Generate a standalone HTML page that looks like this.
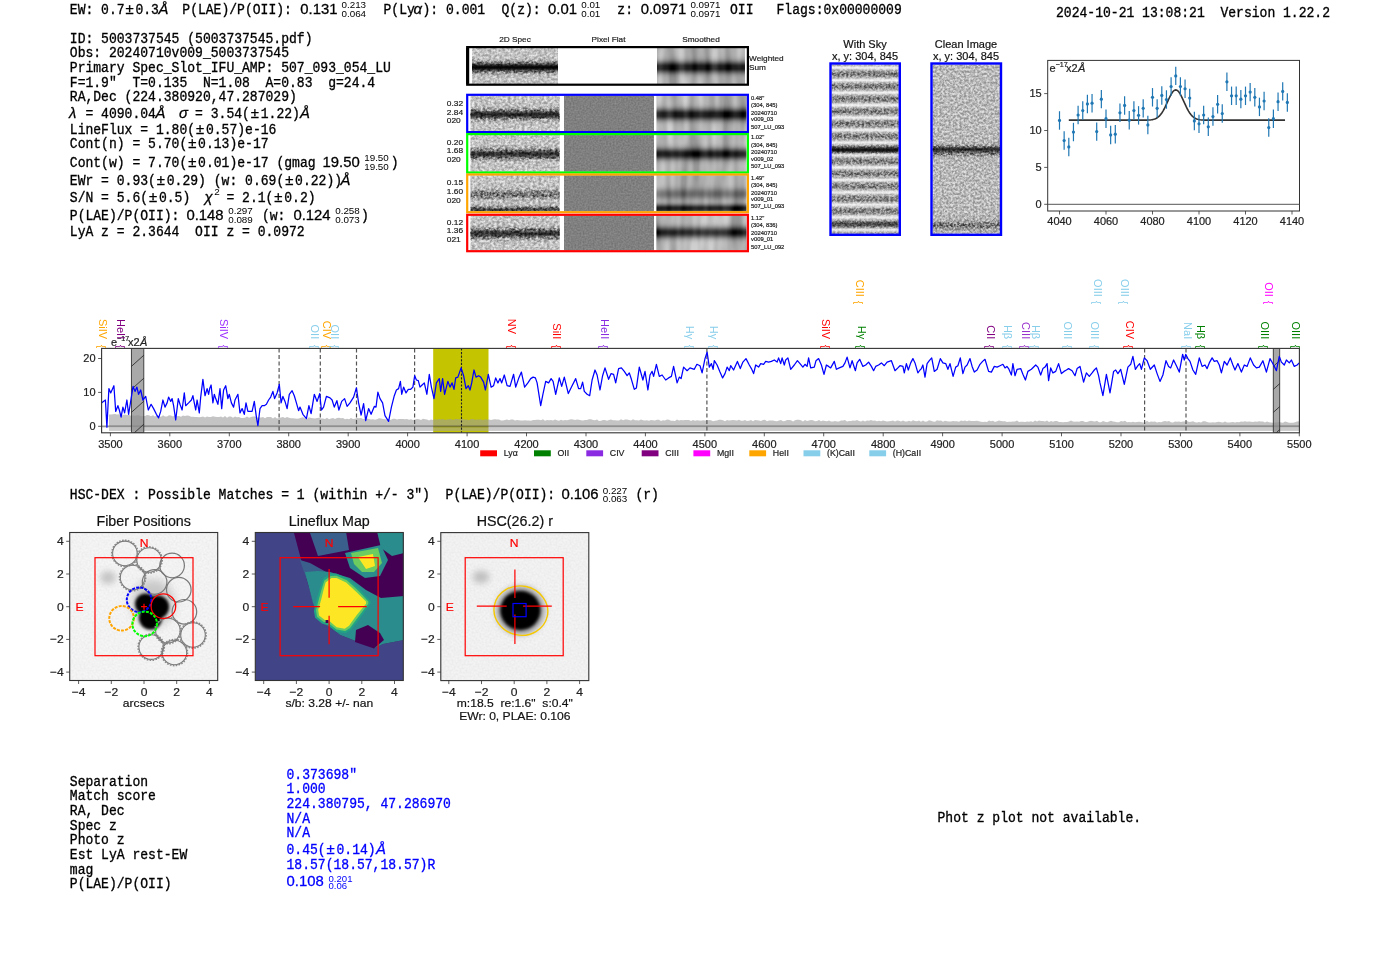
<!DOCTYPE html>
<html><head><meta charset="utf-8"><title>ELiXer report</title><style>html,body{margin:0;padding:0;background:#fff;width:1400px;height:953px;overflow:hidden}svg{display:block} text{white-space:pre}</style></head><body>
<svg width="1400" height="953" viewBox="0 0 1400 953">
<defs>
<filter id="nz1" x="0" y="0" width="1" height="1" color-interpolation-filters="sRGB">
 <feTurbulence type="fractalNoise" baseFrequency="0.36 0.42" numOctaves="2" seed="4"/>
 <feColorMatrix type="matrix" values="2.0 0 0 0 -0.5  2.0 0 0 0 -0.5  2.0 0 0 0 -0.5  0 0 0 0 1"/>
</filter>
<filter id="nzs" x="0" y="0" width="1" height="1" color-interpolation-filters="sRGB">
 <feTurbulence type="fractalNoise" baseFrequency="0.45" numOctaves="2" seed="11"/>
 <feColorMatrix type="matrix" values="2.2 0 0 0 -0.6  2.2 0 0 0 -0.6  2.2 0 0 0 -0.6  0 0 0 0 1"/>
</filter>
<filter id="nz2" x="0" y="0" width="1" height="1" color-interpolation-filters="sRGB">
 <feTurbulence type="fractalNoise" baseFrequency="0.09 0.015" numOctaves="2" seed="9"/>
 <feColorMatrix type="matrix" values="2 0 0 0 -0.5  2 0 0 0 -0.5  2 0 0 0 -0.5  0 0 0 0 1"/>
</filter>
<filter id="nz3" x="0" y="0" width="1" height="1" color-interpolation-filters="sRGB">
 <feTurbulence type="fractalNoise" baseFrequency="0.6" numOctaves="1" seed="2"/>
 <feColorMatrix type="matrix" values="1.5 0 0 0 -0.25  1.5 0 0 0 -0.25  1.5 0 0 0 -0.25  0 0 0 0 1"/>
</filter>

<filter id="blur3" x="-50%" y="-50%" width="200%" height="200%"><feGaussianBlur stdDeviation="3"/></filter>
<filter id="blur2" x="-50%" y="-50%" width="200%" height="200%"><feGaussianBlur stdDeviation="2"/></filter>
<filter id="blur15" x="-50%" y="-50%" width="200%" height="200%"><feGaussianBlur stdDeviation="1.6"/></filter>
<filter id="blur5" x="-50%" y="-50%" width="200%" height="200%"><feGaussianBlur stdDeviation="5"/></filter>
<radialGradient id="galaxy" cx="0.5" cy="0.5" r="0.5">
 <stop offset="0" stop-color="#000"/><stop offset="0.55" stop-color="#000"/><stop offset="0.75" stop-color="#555"/>
 <stop offset="0.9" stop-color="#ccc"/><stop offset="1" stop-color="#f4f4f4" stop-opacity="0"/>
</radialGradient>
<filter id="nzl" x="0" y="0" width="1" height="1" color-interpolation-filters="sRGB">
 <feTurbulence type="fractalNoise" baseFrequency="0.5" numOctaves="1" seed="7"/>
 <feColorMatrix type="matrix" values="0 0 0 0 0  0 0 0 0 0  0 0 0 0 0  1 0 0 0 -0.3"/>
</filter>
</defs>
<rect width="1400" height="953" fill="#fff"/>
<text transform="translate(69.8,13.9) scale(1.0,1.08)" font-family='"Liberation Mono", monospace' font-size="13.05" fill="#000" stroke="#000" stroke-width="0.3">EW: 0.7</text>
<text transform="translate(125.51,13.9) scale(1.144,1.06)" font-family='"Liberation Sans", sans-serif' font-size="13" fill="#000" stroke="#000" stroke-width="0.25">±</text>
<text transform="translate(135.46,13.9) scale(1.0,1.08)" font-family='"Liberation Mono", monospace' font-size="13.05" fill="#000" stroke="#000" stroke-width="0.3">0.3</text>
<text transform="translate(158.5,13.9) scale(1.144,1.06)" font-family='"Liberation Sans", sans-serif' font-size="13" fill="#000" font-style="italic" stroke="#000" stroke-width="0.25">Å</text>
<text transform="translate(182.3,13.9) scale(1.0,1.08)" font-family='"Liberation Mono", monospace' font-size="13.05" fill="#000" stroke="#000" stroke-width="0.3">P(LAE)/P(OII): </text>
<text transform="translate(300.3,13.9) scale(1.144,1.06)" font-family='"Liberation Sans", sans-serif' font-size="13" fill="#000" stroke="#000" stroke-width="0.25">0.131</text>
<text transform="translate(341.5,8.4) scale(1.144,1.06)" font-family='"Liberation Sans", sans-serif' font-size="8.6" fill="#000" >0.213</text>
<text transform="translate(341.5,17.4) scale(1.144,1.06)" font-family='"Liberation Sans", sans-serif' font-size="8.6" fill="#000" >0.064</text>
<text transform="translate(383.5,13.9) scale(1.0,1.08)" font-family='"Liberation Mono", monospace' font-size="13.05" fill="#000" stroke="#000" stroke-width="0.3">P(Ly</text>
<text transform="translate(413.5,13.9) scale(1.144,1.06)" font-family='"Liberation Sans", sans-serif' font-size="13" fill="#000" font-style="italic" stroke="#000" stroke-width="0.25">α</text>
<text transform="translate(422.5,13.9) scale(1.0,1.08)" font-family='"Liberation Mono", monospace' font-size="13.05" fill="#000" stroke="#000" stroke-width="0.3">): 0.001</text>
<text transform="translate(501.5,13.9) scale(1.0,1.08)" font-family='"Liberation Mono", monospace' font-size="13.05" fill="#000" stroke="#000" stroke-width="0.3">Q(z): </text>
<text transform="translate(548.0,13.9) scale(1.144,1.06)" font-family='"Liberation Sans", sans-serif' font-size="13" fill="#000" stroke="#000" stroke-width="0.25">0.01</text>
<text transform="translate(581.2,8.4) scale(1.144,1.06)" font-family='"Liberation Sans", sans-serif' font-size="8.6" fill="#000" >0.01</text>
<text transform="translate(581.2,17.4) scale(1.144,1.06)" font-family='"Liberation Sans", sans-serif' font-size="8.6" fill="#000" >0.01</text>
<text transform="translate(617.3,13.9) scale(1.0,1.08)" font-family='"Liberation Mono", monospace' font-size="13.05" fill="#000" stroke="#000" stroke-width="0.3">z: </text>
<text transform="translate(640.7,13.9) scale(1.144,1.06)" font-family='"Liberation Sans", sans-serif' font-size="13" fill="#000" stroke="#000" stroke-width="0.25">0.0971</text>
<text transform="translate(690.4,8.4) scale(1.144,1.06)" font-family='"Liberation Sans", sans-serif' font-size="8.6" fill="#000" >0.0971</text>
<text transform="translate(690.4,17.4) scale(1.144,1.06)" font-family='"Liberation Sans", sans-serif' font-size="8.6" fill="#000" >0.0971</text>
<text transform="translate(730.0,13.9) scale(1.0,1.08)" font-family='"Liberation Mono", monospace' font-size="13.05" fill="#000" stroke="#000" stroke-width="0.3">OII</text>
<text transform="translate(776.5,13.9) scale(1.0,1.08)" font-family='"Liberation Mono", monospace' font-size="13.05" fill="#000" stroke="#000" stroke-width="0.3">Flags:0x00000009</text>
<text transform="translate(1056.0,16.7) scale(1.0,1.08)" font-family='"Liberation Mono", monospace' font-size="13.05" fill="#000" stroke="#000" stroke-width="0.3">2024-10-21 13:08:21  Version 1.22.2</text>
<text transform="translate(69.8,42.5) scale(1.0,1.08)" font-family='"Liberation Mono", monospace' font-size="13.05" fill="#000" stroke="#000" stroke-width="0.3">ID: 5003737545 (5003737545.pdf)</text>
<text transform="translate(69.8,56.7) scale(1.0,1.08)" font-family='"Liberation Mono", monospace' font-size="13.05" fill="#000" stroke="#000" stroke-width="0.3">Obs: 20240710v009_5003737545</text>
<text transform="translate(69.8,71.6) scale(1.0,1.08)" font-family='"Liberation Mono", monospace' font-size="13.05" fill="#000" stroke="#000" stroke-width="0.3">Primary Spec_Slot_IFU_AMP: 507_093_054_LU</text>
<text transform="translate(69.8,86.6) scale(1.0,1.08)" font-family='"Liberation Mono", monospace' font-size="13.05" fill="#000" stroke="#000" stroke-width="0.3">F=1.9"  T=0.135  N=1.08  A=0.83  g=24.4</text>
<text transform="translate(69.8,101.3) scale(1.0,1.08)" font-family='"Liberation Mono", monospace' font-size="13.05" fill="#000" stroke="#000" stroke-width="0.3">RA,Dec (224.380920,47.287029)</text>
<text transform="translate(69.8,133.5) scale(1.0,1.08)" font-family='"Liberation Mono", monospace' font-size="13.05" fill="#000" stroke="#000" stroke-width="0.3">LineFlux = 1.80(</text>
<text transform="translate(195.98,133.5) scale(1.144,1.06)" font-family='"Liberation Sans", sans-serif' font-size="13" fill="#000" stroke="#000" stroke-width="0.25">±</text>
<text transform="translate(205.93,133.5) scale(1.0,1.08)" font-family='"Liberation Mono", monospace' font-size="13.05" fill="#000" stroke="#000" stroke-width="0.3">0.57)e-16</text>
<text transform="translate(69.8,148.4) scale(1.0,1.08)" font-family='"Liberation Mono", monospace' font-size="13.05" fill="#000" stroke="#000" stroke-width="0.3">Cont(n) = 5.70(</text>
<text transform="translate(188.15,148.4) scale(1.144,1.06)" font-family='"Liberation Sans", sans-serif' font-size="13" fill="#000" stroke="#000" stroke-width="0.25">±</text>
<text transform="translate(198.1,148.4) scale(1.0,1.08)" font-family='"Liberation Mono", monospace' font-size="13.05" fill="#000" stroke="#000" stroke-width="0.3">0.13)e-17</text>
<text transform="translate(69.8,235.5) scale(1.0,1.08)" font-family='"Liberation Mono", monospace' font-size="13.05" fill="#000" stroke="#000" stroke-width="0.3">LyA z = 2.3644  OII z = 0.0972</text>
<text transform="translate(69.0,118.3) scale(1.144,1.06)" font-family='"Liberation Sans", sans-serif' font-size="13" fill="#000" font-style="italic" stroke="#000" stroke-width="0.25">λ</text>
<text transform="translate(77.63,118.3) scale(1.0,1.08)" font-family='"Liberation Mono", monospace' font-size="13.05" fill="#000" stroke="#000" stroke-width="0.3"> = 4090.04</text>
<text transform="translate(155.5,118.3) scale(1.144,1.06)" font-family='"Liberation Sans", sans-serif' font-size="13" fill="#000" font-style="italic" stroke="#000" stroke-width="0.25">Å</text>
<text transform="translate(179.0,118.3) scale(1.144,1.06)" font-family='"Liberation Sans", sans-serif' font-size="13" fill="#000" font-style="italic" stroke="#000" stroke-width="0.25">σ</text>
<text transform="translate(187.25,118.3) scale(1.0,1.08)" font-family='"Liberation Mono", monospace' font-size="13.05" fill="#000" stroke="#000" stroke-width="0.3"> = 3.54(</text>
<text transform="translate(250.79,118.3) scale(1.144,1.06)" font-family='"Liberation Sans", sans-serif' font-size="13" fill="#000" stroke="#000" stroke-width="0.25">±</text>
<text transform="translate(260.74,118.3) scale(1.0,1.08)" font-family='"Liberation Mono", monospace' font-size="13.05" fill="#000" stroke="#000" stroke-width="0.3">1.22)</text>
<text transform="translate(300.0,118.3) scale(1.144,1.06)" font-family='"Liberation Sans", sans-serif' font-size="13" fill="#000" font-style="italic" stroke="#000" stroke-width="0.25">Å</text>
<text transform="translate(69.8,166.7) scale(1.0,1.08)" font-family='"Liberation Mono", monospace' font-size="13.05" fill="#000" stroke="#000" stroke-width="0.3">Cont(w) = 7.70(</text>
<text transform="translate(188.15,166.7) scale(1.144,1.06)" font-family='"Liberation Sans", sans-serif' font-size="13" fill="#000" stroke="#000" stroke-width="0.25">±</text>
<text transform="translate(198.1,166.7) scale(1.0,1.08)" font-family='"Liberation Mono", monospace' font-size="13.05" fill="#000" stroke="#000" stroke-width="0.3">0.01)e-17 (gmag </text>
<text transform="translate(322.5,166.7) scale(1.144,1.06)" font-family='"Liberation Sans", sans-serif' font-size="13" fill="#000" stroke="#000" stroke-width="0.25">19.50</text>
<text transform="translate(364.2,160.8) scale(1.144,1.06)" font-family='"Liberation Sans", sans-serif' font-size="8.6" fill="#000" >19.50</text>
<text transform="translate(364.2,169.6) scale(1.144,1.06)" font-family='"Liberation Sans", sans-serif' font-size="8.6" fill="#000" >19.50</text>
<text transform="translate(390.83,166.7) scale(1.0,1.08)" font-family='"Liberation Mono", monospace' font-size="13.05" fill="#000" stroke="#000" stroke-width="0.3">)</text>
<text transform="translate(69.8,184.5) scale(1.0,1.08)" font-family='"Liberation Mono", monospace' font-size="13.05" fill="#000" stroke="#000" stroke-width="0.3">EWr = 0.93(</text>
<text transform="translate(156.83,184.5) scale(1.144,1.06)" font-family='"Liberation Sans", sans-serif' font-size="13" fill="#000" stroke="#000" stroke-width="0.25">±</text>
<text transform="translate(166.78,184.5) scale(1.0,1.08)" font-family='"Liberation Mono", monospace' font-size="13.05" fill="#000" stroke="#000" stroke-width="0.3">0.29) (w: 0.69(</text>
<text transform="translate(285.13,184.5) scale(1.144,1.06)" font-family='"Liberation Sans", sans-serif' font-size="13" fill="#000" stroke="#000" stroke-width="0.25">±</text>
<text transform="translate(295.08,184.5) scale(1.0,1.08)" font-family='"Liberation Mono", monospace' font-size="13.05" fill="#000" stroke="#000" stroke-width="0.3">0.22))</text>
<text transform="translate(340.5,184.5) scale(1.144,1.06)" font-family='"Liberation Sans", sans-serif' font-size="13" fill="#000" font-style="italic" stroke="#000" stroke-width="0.25">Å</text>
<text transform="translate(69.8,201.7) scale(1.0,1.08)" font-family='"Liberation Mono", monospace' font-size="13.05" fill="#000" stroke="#000" stroke-width="0.3">S/N = 5.6(</text>
<text transform="translate(149.0,201.7) scale(1.144,1.06)" font-family='"Liberation Sans", sans-serif' font-size="13" fill="#000" stroke="#000" stroke-width="0.25">±</text>
<text transform="translate(158.95,201.7) scale(1.0,1.08)" font-family='"Liberation Mono", monospace' font-size="13.05" fill="#000" stroke="#000" stroke-width="0.3">0.5)</text>
<text transform="translate(204.5,201.7) scale(1.144,1.06)" font-family='"Liberation Sans", sans-serif' font-size="13" fill="#000" font-style="italic" stroke="#000" stroke-width="0.25">χ</text>
<text transform="translate(214.2,194.8) scale(1.144,1.06)" font-family='"Liberation Sans", sans-serif' font-size="8.6" fill="#000" >2</text>
<text transform="translate(226.4,201.7) scale(1.0,1.08)" font-family='"Liberation Mono", monospace' font-size="13.05" fill="#000" stroke="#000" stroke-width="0.3">= 2.1(</text>
<text transform="translate(274.28,201.7) scale(1.144,1.06)" font-family='"Liberation Sans", sans-serif' font-size="13" fill="#000" stroke="#000" stroke-width="0.25">±</text>
<text transform="translate(284.23,201.7) scale(1.0,1.08)" font-family='"Liberation Mono", monospace' font-size="13.05" fill="#000" stroke="#000" stroke-width="0.3">0.2)</text>
<text transform="translate(69.8,219.5) scale(1.0,1.08)" font-family='"Liberation Mono", monospace' font-size="13.05" fill="#000" stroke="#000" stroke-width="0.3">P(LAE)/P(OII): </text>
<text transform="translate(186.4,219.5) scale(1.144,1.06)" font-family='"Liberation Sans", sans-serif' font-size="13" fill="#000" stroke="#000" stroke-width="0.25">0.148</text>
<text transform="translate(228.2,213.6) scale(1.144,1.06)" font-family='"Liberation Sans", sans-serif' font-size="8.6" fill="#000" >0.297</text>
<text transform="translate(228.2,222.6) scale(1.144,1.06)" font-family='"Liberation Sans", sans-serif' font-size="8.6" fill="#000" >0.089</text>
<text transform="translate(261.9,219.5) scale(1.0,1.08)" font-family='"Liberation Mono", monospace' font-size="13.05" fill="#000" stroke="#000" stroke-width="0.3">(w: </text>
<text transform="translate(293.4,219.5) scale(1.144,1.06)" font-family='"Liberation Sans", sans-serif' font-size="13" fill="#000" stroke="#000" stroke-width="0.25">0.124</text>
<text transform="translate(335.2,213.6) scale(1.144,1.06)" font-family='"Liberation Sans", sans-serif' font-size="8.6" fill="#000" >0.258</text>
<text transform="translate(335.2,222.6) scale(1.144,1.06)" font-family='"Liberation Sans", sans-serif' font-size="8.6" fill="#000" >0.073</text>
<text transform="translate(361.0,219.5) scale(1.0,1.08)" font-family='"Liberation Mono", monospace' font-size="13.05" fill="#000" stroke="#000" stroke-width="0.3">)</text>
<text transform="translate(515,41.5) scale(1.1,1.06)" font-family='"Liberation Sans", sans-serif' font-size="7.5" fill="#222" text-anchor="middle"  stroke="#222" stroke-width="0.18">2D Spec</text>
<text transform="translate(608.5,41.5) scale(1.1,1.06)" font-family='"Liberation Sans", sans-serif' font-size="7.5" fill="#222" text-anchor="middle"  stroke="#222" stroke-width="0.18">Pixel Flat</text>
<text transform="translate(701,41.5) scale(1.1,1.06)" font-family='"Liberation Sans", sans-serif' font-size="7.5" fill="#222" text-anchor="middle"  stroke="#222" stroke-width="0.18">Smoothed</text>
<rect x="466.2" y="47.9" width="282.7" height="36.00000000000001" fill="#fff"/>
<linearGradient id="g1" x1="0" y1="0" x2="0" y2="1"><stop offset="0.000" stop-color="rgb(194,194,194)"/><stop offset="0.025" stop-color="rgb(194,194,194)"/><stop offset="0.050" stop-color="rgb(194,194,194)"/><stop offset="0.075" stop-color="rgb(194,194,194)"/><stop offset="0.100" stop-color="rgb(194,194,194)"/><stop offset="0.125" stop-color="rgb(194,194,194)"/><stop offset="0.150" stop-color="rgb(194,194,194)"/><stop offset="0.175" stop-color="rgb(194,194,194)"/><stop offset="0.200" stop-color="rgb(194,194,194)"/><stop offset="0.225" stop-color="rgb(194,194,194)"/><stop offset="0.250" stop-color="rgb(193,193,193)"/><stop offset="0.275" stop-color="rgb(191,191,191)"/><stop offset="0.300" stop-color="rgb(188,188,188)"/><stop offset="0.325" stop-color="rgb(182,182,182)"/><stop offset="0.350" stop-color="rgb(172,172,172)"/><stop offset="0.375" stop-color="rgb(156,156,156)"/><stop offset="0.400" stop-color="rgb(134,134,134)"/><stop offset="0.425" stop-color="rgb(107,107,107)"/><stop offset="0.450" stop-color="rgb(76,76,76)"/><stop offset="0.475" stop-color="rgb(45,45,45)"/><stop offset="0.500" stop-color="rgb(21,21,21)"/><stop offset="0.525" stop-color="rgb(7,7,7)"/><stop offset="0.550" stop-color="rgb(6,6,6)"/><stop offset="0.575" stop-color="rgb(19,19,19)"/><stop offset="0.600" stop-color="rgb(42,42,42)"/><stop offset="0.625" stop-color="rgb(72,72,72)"/><stop offset="0.650" stop-color="rgb(103,103,103)"/><stop offset="0.675" stop-color="rgb(131,131,131)"/><stop offset="0.700" stop-color="rgb(154,154,154)"/><stop offset="0.725" stop-color="rgb(170,170,170)"/><stop offset="0.750" stop-color="rgb(181,181,181)"/><stop offset="0.775" stop-color="rgb(188,188,188)"/><stop offset="0.800" stop-color="rgb(191,191,191)"/><stop offset="0.825" stop-color="rgb(193,193,193)"/><stop offset="0.850" stop-color="rgb(194,194,194)"/><stop offset="0.875" stop-color="rgb(194,194,194)"/><stop offset="0.900" stop-color="rgb(194,194,194)"/><stop offset="0.925" stop-color="rgb(194,194,194)"/><stop offset="0.950" stop-color="rgb(194,194,194)"/><stop offset="0.975" stop-color="rgb(194,194,194)"/><stop offset="1.000" stop-color="rgb(194,194,194)"/></linearGradient>
<rect x="472" y="47.9" width="86" height="36.00000000000001" fill="url(#g1)"/>
<rect x="472" y="47.9" width="86" height="36.00000000000001" filter="url(#nz1)" opacity="0.6" style="mix-blend-mode:overlay"/>
<linearGradient id="g2" x1="0" y1="0" x2="0" y2="1"><stop offset="0.000" stop-color="rgb(189,189,189)"/><stop offset="0.025" stop-color="rgb(189,189,189)"/><stop offset="0.050" stop-color="rgb(189,189,189)"/><stop offset="0.075" stop-color="rgb(189,189,189)"/><stop offset="0.100" stop-color="rgb(189,189,189)"/><stop offset="0.125" stop-color="rgb(189,189,189)"/><stop offset="0.150" stop-color="rgb(189,189,189)"/><stop offset="0.175" stop-color="rgb(188,188,188)"/><stop offset="0.200" stop-color="rgb(187,187,187)"/><stop offset="0.225" stop-color="rgb(184,184,184)"/><stop offset="0.250" stop-color="rgb(180,180,180)"/><stop offset="0.275" stop-color="rgb(174,174,174)"/><stop offset="0.300" stop-color="rgb(165,165,165)"/><stop offset="0.325" stop-color="rgb(152,152,152)"/><stop offset="0.350" stop-color="rgb(136,136,136)"/><stop offset="0.375" stop-color="rgb(115,115,115)"/><stop offset="0.400" stop-color="rgb(91,91,91)"/><stop offset="0.425" stop-color="rgb(65,65,65)"/><stop offset="0.450" stop-color="rgb(40,40,40)"/><stop offset="0.475" stop-color="rgb(17,17,17)"/><stop offset="0.500" stop-color="rgb(0,0,0)"/><stop offset="0.525" stop-color="rgb(0,0,0)"/><stop offset="0.550" stop-color="rgb(0,0,0)"/><stop offset="0.575" stop-color="rgb(0,0,0)"/><stop offset="0.600" stop-color="rgb(15,15,15)"/><stop offset="0.625" stop-color="rgb(37,37,37)"/><stop offset="0.650" stop-color="rgb(62,62,62)"/><stop offset="0.675" stop-color="rgb(88,88,88)"/><stop offset="0.700" stop-color="rgb(112,112,112)"/><stop offset="0.725" stop-color="rgb(133,133,133)"/><stop offset="0.750" stop-color="rgb(151,151,151)"/><stop offset="0.775" stop-color="rgb(164,164,164)"/><stop offset="0.800" stop-color="rgb(173,173,173)"/><stop offset="0.825" stop-color="rgb(180,180,180)"/><stop offset="0.850" stop-color="rgb(184,184,184)"/><stop offset="0.875" stop-color="rgb(186,186,186)"/><stop offset="0.900" stop-color="rgb(188,188,188)"/><stop offset="0.925" stop-color="rgb(189,189,189)"/><stop offset="0.950" stop-color="rgb(189,189,189)"/><stop offset="0.975" stop-color="rgb(189,189,189)"/><stop offset="1.000" stop-color="rgb(189,189,189)"/></linearGradient>
<rect x="657" y="47.9" width="88" height="36.00000000000001" fill="url(#g2)"/>
<rect x="657" y="47.9" width="88" height="36.00000000000001" filter="url(#nz2)" opacity="0.22"/>
<rect x="467.2" y="47.1" width="280.7" height="37.60000000000001" fill="none" stroke="#000" stroke-width="2.2"/>
<rect x="466.2" y="47.9" width="3" height="36.00000000000001" fill="#000"/>
<text transform="translate(749,61) scale(1.1,1.06)" font-family='"Liberation Sans", sans-serif' font-size="7.5" fill="#222"  stroke="#222" stroke-width="0.18">Weighted</text>
<text transform="translate(749,70) scale(1.1,1.06)" font-family='"Liberation Sans", sans-serif' font-size="7.5" fill="#222"  stroke="#222" stroke-width="0.18">Sum</text>
<rect x="466.2" y="95.6" width="282.7" height="35.70000000000002" fill="#fff"/>
<linearGradient id="g3" x1="0" y1="0" x2="0" y2="1"><stop offset="0.000" stop-color="rgb(194,194,194)"/><stop offset="0.025" stop-color="rgb(194,194,194)"/><stop offset="0.050" stop-color="rgb(194,194,194)"/><stop offset="0.075" stop-color="rgb(194,194,194)"/><stop offset="0.100" stop-color="rgb(194,194,194)"/><stop offset="0.125" stop-color="rgb(194,194,194)"/><stop offset="0.150" stop-color="rgb(194,194,194)"/><stop offset="0.175" stop-color="rgb(194,194,194)"/><stop offset="0.200" stop-color="rgb(194,194,194)"/><stop offset="0.225" stop-color="rgb(194,194,194)"/><stop offset="0.250" stop-color="rgb(193,193,193)"/><stop offset="0.275" stop-color="rgb(192,192,192)"/><stop offset="0.300" stop-color="rgb(188,188,188)"/><stop offset="0.325" stop-color="rgb(183,183,183)"/><stop offset="0.350" stop-color="rgb(173,173,173)"/><stop offset="0.375" stop-color="rgb(158,158,158)"/><stop offset="0.400" stop-color="rgb(138,138,138)"/><stop offset="0.425" stop-color="rgb(113,113,113)"/><stop offset="0.450" stop-color="rgb(86,86,86)"/><stop offset="0.475" stop-color="rgb(61,61,61)"/><stop offset="0.500" stop-color="rgb(43,43,43)"/><stop offset="0.525" stop-color="rgb(35,35,35)"/><stop offset="0.550" stop-color="rgb(39,39,39)"/><stop offset="0.575" stop-color="rgb(54,54,54)"/><stop offset="0.600" stop-color="rgb(77,77,77)"/><stop offset="0.625" stop-color="rgb(104,104,104)"/><stop offset="0.650" stop-color="rgb(130,130,130)"/><stop offset="0.675" stop-color="rgb(152,152,152)"/><stop offset="0.700" stop-color="rgb(168,168,168)"/><stop offset="0.725" stop-color="rgb(180,180,180)"/><stop offset="0.750" stop-color="rgb(187,187,187)"/><stop offset="0.775" stop-color="rgb(191,191,191)"/><stop offset="0.800" stop-color="rgb(193,193,193)"/><stop offset="0.825" stop-color="rgb(194,194,194)"/><stop offset="0.850" stop-color="rgb(194,194,194)"/><stop offset="0.875" stop-color="rgb(194,194,194)"/><stop offset="0.900" stop-color="rgb(194,194,194)"/><stop offset="0.925" stop-color="rgb(194,194,194)"/><stop offset="0.950" stop-color="rgb(194,194,194)"/><stop offset="0.975" stop-color="rgb(194,194,194)"/><stop offset="1.000" stop-color="rgb(194,194,194)"/></linearGradient>
<rect x="470.5" y="95.6" width="89.20000000000005" height="35.70000000000002" fill="url(#g3)"/>
<rect x="470.5" y="95.6" width="89.20000000000005" height="35.70000000000002" filter="url(#nz1)" opacity="0.65" style="mix-blend-mode:overlay"/>
<rect x="564" y="95.6" width="90" height="35.70000000000002" fill="rgb(128,128,128)"/>
<rect x="564" y="95.6" width="90" height="35.70000000000002" filter="url(#nz3)" opacity="0.12"/>
<linearGradient id="g4" x1="0" y1="0" x2="0" y2="1"><stop offset="0.000" stop-color="rgb(194,194,194)"/><stop offset="0.025" stop-color="rgb(194,194,194)"/><stop offset="0.050" stop-color="rgb(194,194,194)"/><stop offset="0.075" stop-color="rgb(194,194,194)"/><stop offset="0.100" stop-color="rgb(194,194,194)"/><stop offset="0.125" stop-color="rgb(194,194,194)"/><stop offset="0.150" stop-color="rgb(193,193,193)"/><stop offset="0.175" stop-color="rgb(192,192,192)"/><stop offset="0.200" stop-color="rgb(190,190,190)"/><stop offset="0.225" stop-color="rgb(187,187,187)"/><stop offset="0.250" stop-color="rgb(182,182,182)"/><stop offset="0.275" stop-color="rgb(175,175,175)"/><stop offset="0.300" stop-color="rgb(164,164,164)"/><stop offset="0.325" stop-color="rgb(149,149,149)"/><stop offset="0.350" stop-color="rgb(130,130,130)"/><stop offset="0.375" stop-color="rgb(108,108,108)"/><stop offset="0.400" stop-color="rgb(83,83,83)"/><stop offset="0.425" stop-color="rgb(56,56,56)"/><stop offset="0.450" stop-color="rgb(31,31,31)"/><stop offset="0.475" stop-color="rgb(10,10,10)"/><stop offset="0.500" stop-color="rgb(0,0,0)"/><stop offset="0.525" stop-color="rgb(0,0,0)"/><stop offset="0.550" stop-color="rgb(0,0,0)"/><stop offset="0.575" stop-color="rgb(4,4,4)"/><stop offset="0.600" stop-color="rgb(23,23,23)"/><stop offset="0.625" stop-color="rgb(47,47,47)"/><stop offset="0.650" stop-color="rgb(73,73,73)"/><stop offset="0.675" stop-color="rgb(99,99,99)"/><stop offset="0.700" stop-color="rgb(123,123,123)"/><stop offset="0.725" stop-color="rgb(143,143,143)"/><stop offset="0.750" stop-color="rgb(159,159,159)"/><stop offset="0.775" stop-color="rgb(171,171,171)"/><stop offset="0.800" stop-color="rgb(180,180,180)"/><stop offset="0.825" stop-color="rgb(186,186,186)"/><stop offset="0.850" stop-color="rgb(189,189,189)"/><stop offset="0.875" stop-color="rgb(192,192,192)"/><stop offset="0.900" stop-color="rgb(193,193,193)"/><stop offset="0.925" stop-color="rgb(194,194,194)"/><stop offset="0.950" stop-color="rgb(194,194,194)"/><stop offset="0.975" stop-color="rgb(194,194,194)"/><stop offset="1.000" stop-color="rgb(194,194,194)"/></linearGradient>
<rect x="656.5" y="95.6" width="90.0" height="35.70000000000002" fill="url(#g4)"/>
<rect x="656.5" y="95.6" width="90.0" height="35.70000000000002" filter="url(#nz2)" opacity="0.22"/>
<rect x="467.2" y="94.8" width="280.7" height="37.30000000000002" fill="none" stroke="#0000ff" stroke-width="2.2"/>
<text transform="translate(446.8,105.5) scale(1.1,1.06)" font-family='"Liberation Sans", sans-serif' font-size="7.6" fill="#222"  stroke="#222" stroke-width="0.18">0.32</text>
<text transform="translate(446.8,114.5) scale(1.1,1.06)" font-family='"Liberation Sans", sans-serif' font-size="7.6" fill="#222"  stroke="#222" stroke-width="0.18">2.84</text>
<text transform="translate(446.8,122.9) scale(1.1,1.06)" font-family='"Liberation Sans", sans-serif' font-size="7.6" fill="#222"  stroke="#222" stroke-width="0.18">020</text>
<text transform="translate(751,99.8) scale(1.1,1.06)" font-family='"Liberation Sans", sans-serif' font-size="5.3" fill="#222"  stroke="#222" stroke-width="0.18">0.48"</text>
<text transform="translate(751,107.2) scale(1.1,1.06)" font-family='"Liberation Sans", sans-serif' font-size="5.3" fill="#222"  stroke="#222" stroke-width="0.18">(304, 845)</text>
<text transform="translate(751,115.0) scale(1.1,1.06)" font-family='"Liberation Sans", sans-serif' font-size="5.3" fill="#222"  stroke="#222" stroke-width="0.18">20240710</text>
<text transform="translate(751,121.3) scale(1.1,1.06)" font-family='"Liberation Sans", sans-serif' font-size="5.3" fill="#222"  stroke="#222" stroke-width="0.18">v009_03</text>
<text transform="translate(751,128.7) scale(1.1,1.06)" font-family='"Liberation Sans", sans-serif' font-size="5.3" fill="#222"  stroke="#222" stroke-width="0.18">507_LU_093</text>
<rect x="466.2" y="134.9" width="282.7" height="36.79999999999998" fill="#fff"/>
<linearGradient id="g5" x1="0" y1="0" x2="0" y2="1"><stop offset="0.000" stop-color="rgb(194,194,194)"/><stop offset="0.025" stop-color="rgb(194,194,194)"/><stop offset="0.050" stop-color="rgb(194,194,194)"/><stop offset="0.075" stop-color="rgb(194,194,194)"/><stop offset="0.100" stop-color="rgb(194,194,194)"/><stop offset="0.125" stop-color="rgb(194,194,194)"/><stop offset="0.150" stop-color="rgb(194,194,194)"/><stop offset="0.175" stop-color="rgb(194,194,194)"/><stop offset="0.200" stop-color="rgb(194,194,194)"/><stop offset="0.225" stop-color="rgb(194,194,194)"/><stop offset="0.250" stop-color="rgb(193,193,193)"/><stop offset="0.275" stop-color="rgb(192,192,192)"/><stop offset="0.300" stop-color="rgb(188,188,188)"/><stop offset="0.325" stop-color="rgb(182,182,182)"/><stop offset="0.350" stop-color="rgb(172,172,172)"/><stop offset="0.375" stop-color="rgb(156,156,156)"/><stop offset="0.400" stop-color="rgb(136,136,136)"/><stop offset="0.425" stop-color="rgb(111,111,111)"/><stop offset="0.450" stop-color="rgb(85,85,85)"/><stop offset="0.475" stop-color="rgb(63,63,63)"/><stop offset="0.500" stop-color="rgb(48,48,48)"/><stop offset="0.525" stop-color="rgb(45,45,45)"/><stop offset="0.550" stop-color="rgb(54,54,54)"/><stop offset="0.575" stop-color="rgb(73,73,73)"/><stop offset="0.600" stop-color="rgb(97,97,97)"/><stop offset="0.625" stop-color="rgb(123,123,123)"/><stop offset="0.650" stop-color="rgb(146,146,146)"/><stop offset="0.675" stop-color="rgb(164,164,164)"/><stop offset="0.700" stop-color="rgb(177,177,177)"/><stop offset="0.725" stop-color="rgb(185,185,185)"/><stop offset="0.750" stop-color="rgb(190,190,190)"/><stop offset="0.775" stop-color="rgb(193,193,193)"/><stop offset="0.800" stop-color="rgb(194,194,194)"/><stop offset="0.825" stop-color="rgb(194,194,194)"/><stop offset="0.850" stop-color="rgb(194,194,194)"/><stop offset="0.875" stop-color="rgb(194,194,194)"/><stop offset="0.900" stop-color="rgb(194,194,194)"/><stop offset="0.925" stop-color="rgb(194,194,194)"/><stop offset="0.950" stop-color="rgb(194,194,194)"/><stop offset="0.975" stop-color="rgb(194,194,194)"/><stop offset="1.000" stop-color="rgb(194,194,194)"/></linearGradient>
<rect x="470.5" y="134.9" width="89.20000000000005" height="36.79999999999998" fill="url(#g5)"/>
<rect x="470.5" y="134.9" width="89.20000000000005" height="36.79999999999998" filter="url(#nz1)" opacity="0.65" style="mix-blend-mode:overlay"/>
<rect x="564" y="134.9" width="90" height="36.79999999999998" fill="rgb(128,128,128)"/>
<rect x="564" y="134.9" width="90" height="36.79999999999998" filter="url(#nz3)" opacity="0.12"/>
<linearGradient id="g6" x1="0" y1="0" x2="0" y2="1"><stop offset="0.000" stop-color="rgb(194,194,194)"/><stop offset="0.025" stop-color="rgb(194,194,194)"/><stop offset="0.050" stop-color="rgb(194,194,194)"/><stop offset="0.075" stop-color="rgb(194,194,194)"/><stop offset="0.100" stop-color="rgb(194,194,194)"/><stop offset="0.125" stop-color="rgb(194,194,194)"/><stop offset="0.150" stop-color="rgb(194,194,194)"/><stop offset="0.175" stop-color="rgb(193,193,193)"/><stop offset="0.200" stop-color="rgb(192,192,192)"/><stop offset="0.225" stop-color="rgb(189,189,189)"/><stop offset="0.250" stop-color="rgb(185,185,185)"/><stop offset="0.275" stop-color="rgb(178,178,178)"/><stop offset="0.300" stop-color="rgb(168,168,168)"/><stop offset="0.325" stop-color="rgb(154,154,154)"/><stop offset="0.350" stop-color="rgb(135,135,135)"/><stop offset="0.375" stop-color="rgb(111,111,111)"/><stop offset="0.400" stop-color="rgb(85,85,85)"/><stop offset="0.425" stop-color="rgb(57,57,57)"/><stop offset="0.450" stop-color="rgb(31,31,31)"/><stop offset="0.475" stop-color="rgb(10,10,10)"/><stop offset="0.500" stop-color="rgb(0,0,0)"/><stop offset="0.525" stop-color="rgb(0,0,0)"/><stop offset="0.550" stop-color="rgb(2,2,2)"/><stop offset="0.575" stop-color="rgb(19,19,19)"/><stop offset="0.600" stop-color="rgb(43,43,43)"/><stop offset="0.625" stop-color="rgb(70,70,70)"/><stop offset="0.650" stop-color="rgb(98,98,98)"/><stop offset="0.675" stop-color="rgb(123,123,123)"/><stop offset="0.700" stop-color="rgb(144,144,144)"/><stop offset="0.725" stop-color="rgb(161,161,161)"/><stop offset="0.750" stop-color="rgb(174,174,174)"/><stop offset="0.775" stop-color="rgb(182,182,182)"/><stop offset="0.800" stop-color="rgb(187,187,187)"/><stop offset="0.825" stop-color="rgb(191,191,191)"/><stop offset="0.850" stop-color="rgb(193,193,193)"/><stop offset="0.875" stop-color="rgb(194,194,194)"/><stop offset="0.900" stop-color="rgb(194,194,194)"/><stop offset="0.925" stop-color="rgb(194,194,194)"/><stop offset="0.950" stop-color="rgb(194,194,194)"/><stop offset="0.975" stop-color="rgb(194,194,194)"/><stop offset="1.000" stop-color="rgb(194,194,194)"/></linearGradient>
<rect x="656.5" y="134.9" width="90.0" height="36.79999999999998" fill="url(#g6)"/>
<rect x="656.5" y="134.9" width="90.0" height="36.79999999999998" filter="url(#nz2)" opacity="0.22"/>
<rect x="467.2" y="134.1" width="280.7" height="38.399999999999984" fill="none" stroke="#00ff00" stroke-width="2.2"/>
<text transform="translate(446.8,144.8) scale(1.1,1.06)" font-family='"Liberation Sans", sans-serif' font-size="7.6" fill="#222"  stroke="#222" stroke-width="0.18">0.20</text>
<text transform="translate(446.8,153.3) scale(1.1,1.06)" font-family='"Liberation Sans", sans-serif' font-size="7.6" fill="#222"  stroke="#222" stroke-width="0.18">1.68</text>
<text transform="translate(446.8,162.1) scale(1.1,1.06)" font-family='"Liberation Sans", sans-serif' font-size="7.6" fill="#222"  stroke="#222" stroke-width="0.18">020</text>
<text transform="translate(751,139.1) scale(1.1,1.06)" font-family='"Liberation Sans", sans-serif' font-size="5.3" fill="#222"  stroke="#222" stroke-width="0.18">1.02"</text>
<text transform="translate(751,146.5) scale(1.1,1.06)" font-family='"Liberation Sans", sans-serif' font-size="5.3" fill="#222"  stroke="#222" stroke-width="0.18">(304, 845)</text>
<text transform="translate(751,154.29999999999998) scale(1.1,1.06)" font-family='"Liberation Sans", sans-serif' font-size="5.3" fill="#222"  stroke="#222" stroke-width="0.18">20240710</text>
<text transform="translate(751,160.6) scale(1.1,1.06)" font-family='"Liberation Sans", sans-serif' font-size="5.3" fill="#222"  stroke="#222" stroke-width="0.18">v009_02</text>
<text transform="translate(751,168.0) scale(1.1,1.06)" font-family='"Liberation Sans", sans-serif' font-size="5.3" fill="#222"  stroke="#222" stroke-width="0.18">507_LU_093</text>
<rect x="466.2" y="175.3" width="282.7" height="36.099999999999994" fill="#fff"/>
<linearGradient id="g7" x1="0" y1="0" x2="0" y2="1"><stop offset="0.000" stop-color="rgb(194,194,194)"/><stop offset="0.025" stop-color="rgb(194,194,194)"/><stop offset="0.050" stop-color="rgb(194,194,194)"/><stop offset="0.075" stop-color="rgb(194,194,194)"/><stop offset="0.100" stop-color="rgb(194,194,194)"/><stop offset="0.125" stop-color="rgb(194,194,194)"/><stop offset="0.150" stop-color="rgb(194,194,194)"/><stop offset="0.175" stop-color="rgb(194,194,194)"/><stop offset="0.200" stop-color="rgb(194,194,194)"/><stop offset="0.225" stop-color="rgb(194,194,194)"/><stop offset="0.250" stop-color="rgb(194,194,194)"/><stop offset="0.275" stop-color="rgb(194,194,194)"/><stop offset="0.300" stop-color="rgb(193,193,193)"/><stop offset="0.325" stop-color="rgb(191,191,191)"/><stop offset="0.350" stop-color="rgb(187,187,187)"/><stop offset="0.375" stop-color="rgb(180,180,180)"/><stop offset="0.400" stop-color="rgb(171,171,171)"/><stop offset="0.425" stop-color="rgb(158,158,158)"/><stop offset="0.450" stop-color="rgb(144,144,144)"/><stop offset="0.475" stop-color="rgb(130,130,130)"/><stop offset="0.500" stop-color="rgb(119,119,119)"/><stop offset="0.525" stop-color="rgb(115,115,115)"/><stop offset="0.550" stop-color="rgb(117,117,117)"/><stop offset="0.575" stop-color="rgb(126,126,126)"/><stop offset="0.600" stop-color="rgb(139,139,139)"/><stop offset="0.625" stop-color="rgb(153,153,153)"/><stop offset="0.650" stop-color="rgb(167,167,167)"/><stop offset="0.675" stop-color="rgb(177,177,177)"/><stop offset="0.700" stop-color="rgb(185,185,185)"/><stop offset="0.725" stop-color="rgb(189,189,189)"/><stop offset="0.750" stop-color="rgb(192,192,192)"/><stop offset="0.775" stop-color="rgb(192,192,192)"/><stop offset="0.800" stop-color="rgb(190,190,190)"/><stop offset="0.825" stop-color="rgb(183,183,183)"/><stop offset="0.850" stop-color="rgb(167,167,167)"/><stop offset="0.875" stop-color="rgb(139,139,139)"/><stop offset="0.900" stop-color="rgb(104,104,104)"/><stop offset="0.925" stop-color="rgb(75,75,75)"/><stop offset="0.950" stop-color="rgb(65,65,65)"/><stop offset="0.975" stop-color="rgb(80,80,80)"/><stop offset="1.000" stop-color="rgb(112,112,112)"/></linearGradient>
<rect x="470.5" y="175.3" width="89.20000000000005" height="36.099999999999994" fill="url(#g7)"/>
<rect x="470.5" y="175.3" width="89.20000000000005" height="36.099999999999994" filter="url(#nz1)" opacity="0.65" style="mix-blend-mode:overlay"/>
<rect x="564" y="175.3" width="90" height="36.099999999999994" fill="rgb(128,128,128)"/>
<rect x="564" y="175.3" width="90" height="36.099999999999994" filter="url(#nz3)" opacity="0.12"/>
<linearGradient id="g8" x1="0" y1="0" x2="0" y2="1"><stop offset="0.000" stop-color="rgb(194,194,194)"/><stop offset="0.025" stop-color="rgb(194,194,194)"/><stop offset="0.050" stop-color="rgb(194,194,194)"/><stop offset="0.075" stop-color="rgb(194,194,194)"/><stop offset="0.100" stop-color="rgb(194,194,194)"/><stop offset="0.125" stop-color="rgb(194,194,194)"/><stop offset="0.150" stop-color="rgb(194,194,194)"/><stop offset="0.175" stop-color="rgb(194,194,194)"/><stop offset="0.200" stop-color="rgb(193,193,193)"/><stop offset="0.225" stop-color="rgb(192,192,192)"/><stop offset="0.250" stop-color="rgb(190,190,190)"/><stop offset="0.275" stop-color="rgb(186,186,186)"/><stop offset="0.300" stop-color="rgb(182,182,182)"/><stop offset="0.325" stop-color="rgb(175,175,175)"/><stop offset="0.350" stop-color="rgb(166,166,166)"/><stop offset="0.375" stop-color="rgb(155,155,155)"/><stop offset="0.400" stop-color="rgb(143,143,143)"/><stop offset="0.425" stop-color="rgb(131,131,131)"/><stop offset="0.450" stop-color="rgb(120,120,120)"/><stop offset="0.475" stop-color="rgb(111,111,111)"/><stop offset="0.500" stop-color="rgb(106,106,106)"/><stop offset="0.525" stop-color="rgb(105,105,105)"/><stop offset="0.550" stop-color="rgb(108,108,108)"/><stop offset="0.575" stop-color="rgb(116,116,116)"/><stop offset="0.600" stop-color="rgb(126,126,126)"/><stop offset="0.625" stop-color="rgb(138,138,138)"/><stop offset="0.650" stop-color="rgb(149,149,149)"/><stop offset="0.675" stop-color="rgb(159,159,159)"/><stop offset="0.700" stop-color="rgb(165,165,165)"/><stop offset="0.725" stop-color="rgb(166,166,166)"/><stop offset="0.750" stop-color="rgb(160,160,160)"/><stop offset="0.775" stop-color="rgb(144,144,144)"/><stop offset="0.800" stop-color="rgb(120,120,120)"/><stop offset="0.825" stop-color="rgb(88,88,88)"/><stop offset="0.850" stop-color="rgb(53,53,53)"/><stop offset="0.875" stop-color="rgb(21,21,21)"/><stop offset="0.900" stop-color="rgb(0,0,0)"/><stop offset="0.925" stop-color="rgb(0,0,0)"/><stop offset="0.950" stop-color="rgb(7,7,7)"/><stop offset="0.975" stop-color="rgb(34,34,34)"/><stop offset="1.000" stop-color="rgb(69,69,69)"/></linearGradient>
<rect x="656.5" y="175.3" width="90.0" height="36.099999999999994" fill="url(#g8)"/>
<rect x="656.5" y="175.3" width="90.0" height="36.099999999999994" filter="url(#nz2)" opacity="0.22"/>
<rect x="467.2" y="174.5" width="280.7" height="37.699999999999996" fill="none" stroke="#ffa500" stroke-width="2.2"/>
<text transform="translate(446.8,185.2) scale(1.1,1.06)" font-family='"Liberation Sans", sans-serif' font-size="7.6" fill="#222"  stroke="#222" stroke-width="0.18">0.15</text>
<text transform="translate(446.8,193.7) scale(1.1,1.06)" font-family='"Liberation Sans", sans-serif' font-size="7.6" fill="#222"  stroke="#222" stroke-width="0.18">1.60</text>
<text transform="translate(446.8,202.6) scale(1.1,1.06)" font-family='"Liberation Sans", sans-serif' font-size="7.6" fill="#222"  stroke="#222" stroke-width="0.18">020</text>
<text transform="translate(751,179.5) scale(1.1,1.06)" font-family='"Liberation Sans", sans-serif' font-size="5.3" fill="#222"  stroke="#222" stroke-width="0.18">1.49"</text>
<text transform="translate(751,186.9) scale(1.1,1.06)" font-family='"Liberation Sans", sans-serif' font-size="5.3" fill="#222"  stroke="#222" stroke-width="0.18">(304, 845)</text>
<text transform="translate(751,194.7) scale(1.1,1.06)" font-family='"Liberation Sans", sans-serif' font-size="5.3" fill="#222"  stroke="#222" stroke-width="0.18">20240710</text>
<text transform="translate(751,201.0) scale(1.1,1.06)" font-family='"Liberation Sans", sans-serif' font-size="5.3" fill="#222"  stroke="#222" stroke-width="0.18">v009_01</text>
<text transform="translate(751,208.4) scale(1.1,1.06)" font-family='"Liberation Sans", sans-serif' font-size="5.3" fill="#222"  stroke="#222" stroke-width="0.18">507_LU_093</text>
<rect x="466.2" y="215.6" width="282.7" height="34.80000000000001" fill="#fff"/>
<linearGradient id="g9" x1="0" y1="0" x2="0" y2="1"><stop offset="0.000" stop-color="rgb(194,194,194)"/><stop offset="0.025" stop-color="rgb(194,194,194)"/><stop offset="0.050" stop-color="rgb(194,194,194)"/><stop offset="0.075" stop-color="rgb(194,194,194)"/><stop offset="0.100" stop-color="rgb(194,194,194)"/><stop offset="0.125" stop-color="rgb(194,194,194)"/><stop offset="0.150" stop-color="rgb(194,194,194)"/><stop offset="0.175" stop-color="rgb(194,194,194)"/><stop offset="0.200" stop-color="rgb(194,194,194)"/><stop offset="0.225" stop-color="rgb(193,193,193)"/><stop offset="0.250" stop-color="rgb(192,192,192)"/><stop offset="0.275" stop-color="rgb(189,189,189)"/><stop offset="0.300" stop-color="rgb(185,185,185)"/><stop offset="0.325" stop-color="rgb(177,177,177)"/><stop offset="0.350" stop-color="rgb(164,164,164)"/><stop offset="0.375" stop-color="rgb(147,147,147)"/><stop offset="0.400" stop-color="rgb(125,125,125)"/><stop offset="0.425" stop-color="rgb(101,101,101)"/><stop offset="0.450" stop-color="rgb(77,77,77)"/><stop offset="0.475" stop-color="rgb(58,58,58)"/><stop offset="0.500" stop-color="rgb(46,46,46)"/><stop offset="0.525" stop-color="rgb(45,45,45)"/><stop offset="0.550" stop-color="rgb(55,55,55)"/><stop offset="0.575" stop-color="rgb(74,74,74)"/><stop offset="0.600" stop-color="rgb(97,97,97)"/><stop offset="0.625" stop-color="rgb(122,122,122)"/><stop offset="0.650" stop-color="rgb(144,144,144)"/><stop offset="0.675" stop-color="rgb(162,162,162)"/><stop offset="0.700" stop-color="rgb(175,175,175)"/><stop offset="0.725" stop-color="rgb(184,184,184)"/><stop offset="0.750" stop-color="rgb(189,189,189)"/><stop offset="0.775" stop-color="rgb(192,192,192)"/><stop offset="0.800" stop-color="rgb(193,193,193)"/><stop offset="0.825" stop-color="rgb(194,194,194)"/><stop offset="0.850" stop-color="rgb(194,194,194)"/><stop offset="0.875" stop-color="rgb(194,194,194)"/><stop offset="0.900" stop-color="rgb(194,194,194)"/><stop offset="0.925" stop-color="rgb(194,194,194)"/><stop offset="0.950" stop-color="rgb(194,194,194)"/><stop offset="0.975" stop-color="rgb(194,194,194)"/><stop offset="1.000" stop-color="rgb(194,194,194)"/></linearGradient>
<rect x="470.5" y="215.6" width="89.20000000000005" height="34.80000000000001" fill="url(#g9)"/>
<rect x="470.5" y="215.6" width="89.20000000000005" height="34.80000000000001" filter="url(#nz1)" opacity="0.65" style="mix-blend-mode:overlay"/>
<rect x="564" y="215.6" width="90" height="34.80000000000001" fill="rgb(128,128,128)"/>
<rect x="564" y="215.6" width="90" height="34.80000000000001" filter="url(#nz3)" opacity="0.12"/>
<linearGradient id="g10" x1="0" y1="0" x2="0" y2="1"><stop offset="0.000" stop-color="rgb(194,194,194)"/><stop offset="0.025" stop-color="rgb(194,194,194)"/><stop offset="0.050" stop-color="rgb(194,194,194)"/><stop offset="0.075" stop-color="rgb(194,194,194)"/><stop offset="0.100" stop-color="rgb(194,194,194)"/><stop offset="0.125" stop-color="rgb(193,193,193)"/><stop offset="0.150" stop-color="rgb(192,192,192)"/><stop offset="0.175" stop-color="rgb(190,190,190)"/><stop offset="0.200" stop-color="rgb(186,186,186)"/><stop offset="0.225" stop-color="rgb(180,180,180)"/><stop offset="0.250" stop-color="rgb(171,171,171)"/><stop offset="0.275" stop-color="rgb(159,159,159)"/><stop offset="0.300" stop-color="rgb(143,143,143)"/><stop offset="0.325" stop-color="rgb(123,123,123)"/><stop offset="0.350" stop-color="rgb(100,100,100)"/><stop offset="0.375" stop-color="rgb(75,75,75)"/><stop offset="0.400" stop-color="rgb(51,51,51)"/><stop offset="0.425" stop-color="rgb(29,29,29)"/><stop offset="0.450" stop-color="rgb(13,13,13)"/><stop offset="0.475" stop-color="rgb(5,5,5)"/><stop offset="0.500" stop-color="rgb(6,6,6)"/><stop offset="0.525" stop-color="rgb(15,15,15)"/><stop offset="0.550" stop-color="rgb(32,32,32)"/><stop offset="0.575" stop-color="rgb(54,54,54)"/><stop offset="0.600" stop-color="rgb(79,79,79)"/><stop offset="0.625" stop-color="rgb(103,103,103)"/><stop offset="0.650" stop-color="rgb(126,126,126)"/><stop offset="0.675" stop-color="rgb(146,146,146)"/><stop offset="0.700" stop-color="rgb(161,161,161)"/><stop offset="0.725" stop-color="rgb(173,173,173)"/><stop offset="0.750" stop-color="rgb(181,181,181)"/><stop offset="0.775" stop-color="rgb(187,187,187)"/><stop offset="0.800" stop-color="rgb(190,190,190)"/><stop offset="0.825" stop-color="rgb(192,192,192)"/><stop offset="0.850" stop-color="rgb(193,193,193)"/><stop offset="0.875" stop-color="rgb(194,194,194)"/><stop offset="0.900" stop-color="rgb(194,194,194)"/><stop offset="0.925" stop-color="rgb(194,194,194)"/><stop offset="0.950" stop-color="rgb(194,194,194)"/><stop offset="0.975" stop-color="rgb(194,194,194)"/><stop offset="1.000" stop-color="rgb(194,194,194)"/></linearGradient>
<rect x="656.5" y="215.6" width="90.0" height="34.80000000000001" fill="url(#g10)"/>
<rect x="656.5" y="215.6" width="90.0" height="34.80000000000001" filter="url(#nz2)" opacity="0.22"/>
<rect x="467.2" y="214.79999999999998" width="280.7" height="36.40000000000001" fill="none" stroke="#ff0000" stroke-width="2.2"/>
<text transform="translate(446.8,224.9) scale(1.1,1.06)" font-family='"Liberation Sans", sans-serif' font-size="7.6" fill="#222"  stroke="#222" stroke-width="0.18">0.12</text>
<text transform="translate(446.8,233.4) scale(1.1,1.06)" font-family='"Liberation Sans", sans-serif' font-size="7.6" fill="#222"  stroke="#222" stroke-width="0.18">1.36</text>
<text transform="translate(446.8,242.3) scale(1.1,1.06)" font-family='"Liberation Sans", sans-serif' font-size="7.6" fill="#222"  stroke="#222" stroke-width="0.18">021</text>
<text transform="translate(751,219.79999999999998) scale(1.1,1.06)" font-family='"Liberation Sans", sans-serif' font-size="5.3" fill="#222"  stroke="#222" stroke-width="0.18">1.12"</text>
<text transform="translate(751,227.2) scale(1.1,1.06)" font-family='"Liberation Sans", sans-serif' font-size="5.3" fill="#222"  stroke="#222" stroke-width="0.18">(304, 836)</text>
<text transform="translate(751,234.99999999999997) scale(1.1,1.06)" font-family='"Liberation Sans", sans-serif' font-size="5.3" fill="#222"  stroke="#222" stroke-width="0.18">20240710</text>
<text transform="translate(751,241.29999999999998) scale(1.1,1.06)" font-family='"Liberation Sans", sans-serif' font-size="5.3" fill="#222"  stroke="#222" stroke-width="0.18">v009_01</text>
<text transform="translate(751,248.7) scale(1.1,1.06)" font-family='"Liberation Sans", sans-serif' font-size="5.3" fill="#222"  stroke="#222" stroke-width="0.18">507_LU_092</text>
<text transform="translate(865,48) scale(1.1,1.06)" font-family='"Liberation Sans", sans-serif' font-size="10" fill="#111" text-anchor="middle"  stroke="#111" stroke-width="0.18">With Sky</text>
<text transform="translate(865,59.5) scale(1.1,1.06)" font-family='"Liberation Sans", sans-serif' font-size="10" fill="#111" text-anchor="middle"  stroke="#111" stroke-width="0.18">x, y: 304, 845</text>
<text transform="translate(966,48) scale(1.1,1.06)" font-family='"Liberation Sans", sans-serif' font-size="10" fill="#111" text-anchor="middle"  stroke="#111" stroke-width="0.18">Clean Image</text>
<text transform="translate(966,59.5) scale(1.1,1.06)" font-family='"Liberation Sans", sans-serif' font-size="10" fill="#111" text-anchor="middle"  stroke="#111" stroke-width="0.18">x, y: 304, 845</text>
<linearGradient id="g11" x1="0" y1="0" x2="0" y2="1"><stop offset="0.000" stop-color="rgb(162,162,162)"/><stop offset="0.006" stop-color="rgb(187,187,187)"/><stop offset="0.012" stop-color="rgb(214,214,214)"/><stop offset="0.018" stop-color="rgb(239,239,239)"/><stop offset="0.024" stop-color="rgb(229,229,229)"/><stop offset="0.029" stop-color="rgb(202,202,202)"/><stop offset="0.035" stop-color="rgb(176,176,176)"/><stop offset="0.041" stop-color="rgb(152,152,152)"/><stop offset="0.047" stop-color="rgb(135,135,135)"/><stop offset="0.053" stop-color="rgb(126,126,126)"/><stop offset="0.059" stop-color="rgb(125,125,125)"/><stop offset="0.065" stop-color="rgb(134,134,134)"/><stop offset="0.071" stop-color="rgb(151,151,151)"/><stop offset="0.076" stop-color="rgb(174,174,174)"/><stop offset="0.082" stop-color="rgb(200,200,200)"/><stop offset="0.088" stop-color="rgb(227,227,227)"/><stop offset="0.094" stop-color="rgb(241,241,241)"/><stop offset="0.100" stop-color="rgb(216,216,216)"/><stop offset="0.106" stop-color="rgb(189,189,189)"/><stop offset="0.112" stop-color="rgb(164,164,164)"/><stop offset="0.118" stop-color="rgb(143,143,143)"/><stop offset="0.124" stop-color="rgb(129,129,129)"/><stop offset="0.129" stop-color="rgb(125,125,125)"/><stop offset="0.135" stop-color="rgb(129,129,129)"/><stop offset="0.141" stop-color="rgb(141,141,141)"/><stop offset="0.147" stop-color="rgb(161,161,161)"/><stop offset="0.153" stop-color="rgb(186,186,186)"/><stop offset="0.159" stop-color="rgb(214,214,214)"/><stop offset="0.165" stop-color="rgb(239,239,239)"/><stop offset="0.171" stop-color="rgb(230,230,230)"/><stop offset="0.176" stop-color="rgb(203,203,203)"/><stop offset="0.182" stop-color="rgb(176,176,176)"/><stop offset="0.188" stop-color="rgb(153,153,153)"/><stop offset="0.194" stop-color="rgb(135,135,135)"/><stop offset="0.200" stop-color="rgb(126,126,126)"/><stop offset="0.206" stop-color="rgb(125,125,125)"/><stop offset="0.212" stop-color="rgb(134,134,134)"/><stop offset="0.218" stop-color="rgb(150,150,150)"/><stop offset="0.224" stop-color="rgb(173,173,173)"/><stop offset="0.229" stop-color="rgb(200,200,200)"/><stop offset="0.235" stop-color="rgb(227,227,227)"/><stop offset="0.241" stop-color="rgb(242,242,242)"/><stop offset="0.247" stop-color="rgb(217,217,217)"/><stop offset="0.253" stop-color="rgb(190,190,190)"/><stop offset="0.259" stop-color="rgb(164,164,164)"/><stop offset="0.265" stop-color="rgb(143,143,143)"/><stop offset="0.271" stop-color="rgb(130,130,130)"/><stop offset="0.276" stop-color="rgb(125,125,125)"/><stop offset="0.282" stop-color="rgb(128,128,128)"/><stop offset="0.288" stop-color="rgb(141,141,141)"/><stop offset="0.294" stop-color="rgb(161,161,161)"/><stop offset="0.300" stop-color="rgb(186,186,186)"/><stop offset="0.306" stop-color="rgb(213,213,213)"/><stop offset="0.312" stop-color="rgb(238,238,238)"/><stop offset="0.318" stop-color="rgb(230,230,230)"/><stop offset="0.324" stop-color="rgb(204,204,204)"/><stop offset="0.329" stop-color="rgb(177,177,177)"/><stop offset="0.335" stop-color="rgb(153,153,153)"/><stop offset="0.341" stop-color="rgb(136,136,136)"/><stop offset="0.347" stop-color="rgb(126,126,126)"/><stop offset="0.353" stop-color="rgb(125,125,125)"/><stop offset="0.359" stop-color="rgb(133,133,133)"/><stop offset="0.365" stop-color="rgb(150,150,150)"/><stop offset="0.371" stop-color="rgb(172,172,172)"/><stop offset="0.376" stop-color="rgb(199,199,199)"/><stop offset="0.382" stop-color="rgb(226,226,226)"/><stop offset="0.388" stop-color="rgb(242,242,242)"/><stop offset="0.394" stop-color="rgb(218,218,218)"/><stop offset="0.400" stop-color="rgb(190,190,190)"/><stop offset="0.406" stop-color="rgb(165,165,165)"/><stop offset="0.412" stop-color="rgb(144,144,144)"/><stop offset="0.418" stop-color="rgb(130,130,130)"/><stop offset="0.424" stop-color="rgb(125,125,125)"/><stop offset="0.429" stop-color="rgb(128,128,128)"/><stop offset="0.435" stop-color="rgb(140,140,140)"/><stop offset="0.441" stop-color="rgb(160,160,160)"/><stop offset="0.447" stop-color="rgb(185,185,185)"/><stop offset="0.453" stop-color="rgb(212,212,212)"/><stop offset="0.459" stop-color="rgb(238,238,238)"/><stop offset="0.465" stop-color="rgb(230,230,230)"/><stop offset="0.471" stop-color="rgb(202,202,202)"/><stop offset="0.476" stop-color="rgb(169,169,169)"/><stop offset="0.482" stop-color="rgb(133,133,133)"/><stop offset="0.488" stop-color="rgb(93,93,93)"/><stop offset="0.494" stop-color="rgb(52,52,52)"/><stop offset="0.500" stop-color="rgb(21,21,21)"/><stop offset="0.506" stop-color="rgb(13,13,13)"/><stop offset="0.512" stop-color="rgb(38,38,38)"/><stop offset="0.518" stop-color="rgb(87,87,87)"/><stop offset="0.524" stop-color="rgb(146,146,146)"/><stop offset="0.529" stop-color="rgb(199,199,199)"/><stop offset="0.535" stop-color="rgb(232,232,232)"/><stop offset="0.541" stop-color="rgb(215,215,215)"/><stop offset="0.547" stop-color="rgb(190,190,190)"/><stop offset="0.553" stop-color="rgb(165,165,165)"/><stop offset="0.559" stop-color="rgb(144,144,144)"/><stop offset="0.565" stop-color="rgb(130,130,130)"/><stop offset="0.571" stop-color="rgb(125,125,125)"/><stop offset="0.576" stop-color="rgb(128,128,128)"/><stop offset="0.582" stop-color="rgb(140,140,140)"/><stop offset="0.588" stop-color="rgb(160,160,160)"/><stop offset="0.594" stop-color="rgb(184,184,184)"/><stop offset="0.600" stop-color="rgb(212,212,212)"/><stop offset="0.606" stop-color="rgb(237,237,237)"/><stop offset="0.612" stop-color="rgb(232,232,232)"/><stop offset="0.618" stop-color="rgb(205,205,205)"/><stop offset="0.624" stop-color="rgb(178,178,178)"/><stop offset="0.629" stop-color="rgb(154,154,154)"/><stop offset="0.635" stop-color="rgb(136,136,136)"/><stop offset="0.641" stop-color="rgb(126,126,126)"/><stop offset="0.647" stop-color="rgb(125,125,125)"/><stop offset="0.653" stop-color="rgb(133,133,133)"/><stop offset="0.659" stop-color="rgb(149,149,149)"/><stop offset="0.665" stop-color="rgb(171,171,171)"/><stop offset="0.671" stop-color="rgb(198,198,198)"/><stop offset="0.676" stop-color="rgb(225,225,225)"/><stop offset="0.682" stop-color="rgb(243,243,243)"/><stop offset="0.688" stop-color="rgb(219,219,219)"/><stop offset="0.694" stop-color="rgb(192,192,192)"/><stop offset="0.700" stop-color="rgb(166,166,166)"/><stop offset="0.706" stop-color="rgb(145,145,145)"/><stop offset="0.712" stop-color="rgb(130,130,130)"/><stop offset="0.718" stop-color="rgb(125,125,125)"/><stop offset="0.724" stop-color="rgb(128,128,128)"/><stop offset="0.729" stop-color="rgb(140,140,140)"/><stop offset="0.735" stop-color="rgb(159,159,159)"/><stop offset="0.741" stop-color="rgb(184,184,184)"/><stop offset="0.747" stop-color="rgb(211,211,211)"/><stop offset="0.753" stop-color="rgb(237,237,237)"/><stop offset="0.759" stop-color="rgb(232,232,232)"/><stop offset="0.765" stop-color="rgb(206,206,206)"/><stop offset="0.771" stop-color="rgb(178,178,178)"/><stop offset="0.776" stop-color="rgb(155,155,155)"/><stop offset="0.782" stop-color="rgb(137,137,137)"/><stop offset="0.788" stop-color="rgb(126,126,126)"/><stop offset="0.794" stop-color="rgb(125,125,125)"/><stop offset="0.800" stop-color="rgb(133,133,133)"/><stop offset="0.806" stop-color="rgb(148,148,148)"/><stop offset="0.812" stop-color="rgb(171,171,171)"/><stop offset="0.818" stop-color="rgb(197,197,197)"/><stop offset="0.824" stop-color="rgb(224,224,224)"/><stop offset="0.829" stop-color="rgb(243,243,243)"/><stop offset="0.835" stop-color="rgb(220,220,220)"/><stop offset="0.841" stop-color="rgb(192,192,192)"/><stop offset="0.847" stop-color="rgb(166,166,166)"/><stop offset="0.853" stop-color="rgb(145,145,145)"/><stop offset="0.859" stop-color="rgb(131,131,131)"/><stop offset="0.865" stop-color="rgb(125,125,125)"/><stop offset="0.871" stop-color="rgb(128,128,128)"/><stop offset="0.876" stop-color="rgb(139,139,139)"/><stop offset="0.882" stop-color="rgb(159,159,159)"/><stop offset="0.888" stop-color="rgb(183,183,183)"/><stop offset="0.894" stop-color="rgb(211,211,211)"/><stop offset="0.900" stop-color="rgb(236,236,236)"/><stop offset="0.906" stop-color="rgb(232,232,232)"/><stop offset="0.912" stop-color="rgb(205,205,205)"/><stop offset="0.918" stop-color="rgb(175,175,175)"/><stop offset="0.924" stop-color="rgb(145,145,145)"/><stop offset="0.929" stop-color="rgb(115,115,115)"/><stop offset="0.935" stop-color="rgb(89,89,89)"/><stop offset="0.941" stop-color="rgb(73,73,73)"/><stop offset="0.947" stop-color="rgb(72,72,72)"/><stop offset="0.953" stop-color="rgb(92,92,92)"/><stop offset="0.959" stop-color="rgb(128,128,128)"/><stop offset="0.965" stop-color="rgb(170,170,170)"/><stop offset="0.971" stop-color="rgb(210,210,210)"/><stop offset="0.976" stop-color="rgb(238,238,238)"/><stop offset="0.982" stop-color="rgb(218,218,218)"/><stop offset="0.988" stop-color="rgb(192,192,192)"/><stop offset="0.994" stop-color="rgb(167,167,167)"/><stop offset="1.000" stop-color="rgb(145,145,145)"/></linearGradient>
<rect x="831.5" y="64.5" width="67.29999999999995" height="169.3" fill="url(#g11)"/>
<rect x="831.5" y="64.5" width="67.29999999999995" height="169.3" filter="url(#nzs)" opacity="0.45" style="mix-blend-mode:overlay"/>
<rect x="830.5" y="63.5" width="69.29999999999995" height="171.3" fill="none" stroke="#0000ff" stroke-width="2.4"/>
<linearGradient id="g12" x1="0" y1="0" x2="0" y2="1"><stop offset="0.000" stop-color="rgb(185,185,185)"/><stop offset="0.025" stop-color="rgb(185,185,185)"/><stop offset="0.050" stop-color="rgb(185,185,185)"/><stop offset="0.075" stop-color="rgb(185,185,185)"/><stop offset="0.100" stop-color="rgb(185,185,185)"/><stop offset="0.125" stop-color="rgb(185,185,185)"/><stop offset="0.150" stop-color="rgb(185,185,185)"/><stop offset="0.175" stop-color="rgb(185,185,185)"/><stop offset="0.200" stop-color="rgb(185,185,185)"/><stop offset="0.225" stop-color="rgb(185,185,185)"/><stop offset="0.250" stop-color="rgb(185,185,185)"/><stop offset="0.275" stop-color="rgb(185,185,185)"/><stop offset="0.300" stop-color="rgb(185,185,185)"/><stop offset="0.325" stop-color="rgb(185,185,185)"/><stop offset="0.350" stop-color="rgb(185,185,185)"/><stop offset="0.375" stop-color="rgb(185,185,185)"/><stop offset="0.400" stop-color="rgb(184,184,184)"/><stop offset="0.425" stop-color="rgb(184,184,184)"/><stop offset="0.450" stop-color="rgb(184,184,184)"/><stop offset="0.475" stop-color="rgb(175,175,175)"/><stop offset="0.500" stop-color="rgb(27,27,27)"/><stop offset="0.525" stop-color="rgb(117,117,117)"/><stop offset="0.550" stop-color="rgb(184,184,184)"/><stop offset="0.575" stop-color="rgb(184,184,184)"/><stop offset="0.600" stop-color="rgb(184,184,184)"/><stop offset="0.625" stop-color="rgb(185,185,185)"/><stop offset="0.650" stop-color="rgb(185,185,185)"/><stop offset="0.675" stop-color="rgb(185,185,185)"/><stop offset="0.700" stop-color="rgb(185,185,185)"/><stop offset="0.725" stop-color="rgb(185,185,185)"/><stop offset="0.750" stop-color="rgb(185,185,185)"/><stop offset="0.775" stop-color="rgb(185,185,185)"/><stop offset="0.800" stop-color="rgb(185,185,185)"/><stop offset="0.825" stop-color="rgb(185,185,185)"/><stop offset="0.850" stop-color="rgb(184,184,184)"/><stop offset="0.875" stop-color="rgb(184,184,184)"/><stop offset="0.900" stop-color="rgb(184,184,184)"/><stop offset="0.925" stop-color="rgb(172,172,172)"/><stop offset="0.950" stop-color="rgb(105,105,105)"/><stop offset="0.975" stop-color="rgb(168,168,168)"/><stop offset="1.000" stop-color="rgb(184,184,184)"/></linearGradient>
<rect x="932.5" y="64.5" width="67.5" height="169.3" fill="url(#g12)"/>
<rect x="932.5" y="64.5" width="67.5" height="169.3" filter="url(#nzs)" opacity="0.55" style="mix-blend-mode:overlay"/>
<rect x="931.5" y="63.5" width="69.5" height="171.3" fill="none" stroke="#0000ff" stroke-width="2.4"/>
<rect x="1047.7" y="60.4" width="251.79999999999995" height="150.6" fill="#fff" stroke="#333" stroke-width="1"/>
<line x1="1047.7" y1="204.3" x2="1299.5" y2="204.3" stroke="#555" stroke-width="1"/>
<line x1="1059.5" y1="211.0" x2="1059.5" y2="214.5" stroke="#333" stroke-width="0.8"/>
<text transform="translate(1059.5,224.5) scale(1.1,1.06)" font-family='"Liberation Sans", sans-serif' font-size="10" fill="#222" text-anchor="middle"  stroke="#222" stroke-width="0.18">4040</text>
<line x1="1106.0" y1="211.0" x2="1106.0" y2="214.5" stroke="#333" stroke-width="0.8"/>
<text transform="translate(1106.0,224.5) scale(1.1,1.06)" font-family='"Liberation Sans", sans-serif' font-size="10" fill="#222" text-anchor="middle"  stroke="#222" stroke-width="0.18">4060</text>
<line x1="1152.5" y1="211.0" x2="1152.5" y2="214.5" stroke="#333" stroke-width="0.8"/>
<text transform="translate(1152.5,224.5) scale(1.1,1.06)" font-family='"Liberation Sans", sans-serif' font-size="10" fill="#222" text-anchor="middle"  stroke="#222" stroke-width="0.18">4080</text>
<line x1="1199.0" y1="211.0" x2="1199.0" y2="214.5" stroke="#333" stroke-width="0.8"/>
<text transform="translate(1199.0,224.5) scale(1.1,1.06)" font-family='"Liberation Sans", sans-serif' font-size="10" fill="#222" text-anchor="middle"  stroke="#222" stroke-width="0.18">4100</text>
<line x1="1245.5" y1="211.0" x2="1245.5" y2="214.5" stroke="#333" stroke-width="0.8"/>
<text transform="translate(1245.5,224.5) scale(1.1,1.06)" font-family='"Liberation Sans", sans-serif' font-size="10" fill="#222" text-anchor="middle"  stroke="#222" stroke-width="0.18">4120</text>
<line x1="1292.0" y1="211.0" x2="1292.0" y2="214.5" stroke="#333" stroke-width="0.8"/>
<text transform="translate(1292.0,224.5) scale(1.1,1.06)" font-family='"Liberation Sans", sans-serif' font-size="10" fill="#222" text-anchor="middle"  stroke="#222" stroke-width="0.18">4140</text>
<line x1="1044.2" y1="204.3" x2="1047.7" y2="204.3" stroke="#333" stroke-width="0.8"/>
<text transform="translate(1041.7,207.9) scale(1.1,1.06)" font-family='"Liberation Sans", sans-serif' font-size="10" fill="#222" text-anchor="end"  stroke="#222" stroke-width="0.18">0</text>
<line x1="1044.2" y1="167.4" x2="1047.7" y2="167.4" stroke="#333" stroke-width="0.8"/>
<text transform="translate(1041.7,171.0) scale(1.1,1.06)" font-family='"Liberation Sans", sans-serif' font-size="10" fill="#222" text-anchor="end"  stroke="#222" stroke-width="0.18">5</text>
<line x1="1044.2" y1="130.5" x2="1047.7" y2="130.5" stroke="#333" stroke-width="0.8"/>
<text transform="translate(1041.7,134.1) scale(1.1,1.06)" font-family='"Liberation Sans", sans-serif' font-size="10" fill="#222" text-anchor="end"  stroke="#222" stroke-width="0.18">10</text>
<line x1="1044.2" y1="93.60000000000001" x2="1047.7" y2="93.60000000000001" stroke="#333" stroke-width="0.8"/>
<text transform="translate(1041.7,97.2) scale(1.1,1.06)" font-family='"Liberation Sans", sans-serif' font-size="10" fill="#222" text-anchor="end"  stroke="#222" stroke-width="0.18">15</text>
<text transform="translate(1049.5,71.5) scale(1.1,1.06)" font-family='"Liberation Sans", sans-serif' font-size="10" fill="#222"  stroke="#222" stroke-width="0.18">e</text>
<text transform="translate(1055.5,66.5) scale(1.1,1.06)" font-family='"Liberation Sans", sans-serif' font-size="6.5" fill="#222"  stroke="#222" stroke-width="0.18">−17</text>
<text transform="translate(1066,71.5) scale(1.1,1.06)" font-family='"Liberation Sans", sans-serif' font-size="10" fill="#222"  stroke="#222" stroke-width="0.18">x2</text>
<text transform="translate(1078,71.5) scale(1.1,1.06)" font-family='"Liberation Sans", sans-serif' font-size="10" fill="#222" font-style="italic" stroke="#222" stroke-width="0.18">Å</text>
<polyline points="1068.80,120.17 1069.96,120.17 1071.12,120.17 1072.29,120.17 1073.45,120.17 1074.61,120.17 1075.78,120.17 1076.94,120.17 1078.10,120.17 1079.26,120.17 1080.42,120.17 1081.59,120.17 1082.75,120.17 1083.91,120.17 1085.08,120.17 1086.24,120.17 1087.40,120.17 1088.56,120.17 1089.72,120.17 1090.89,120.17 1092.05,120.17 1093.21,120.17 1094.38,120.17 1095.54,120.17 1096.70,120.17 1097.86,120.17 1099.03,120.17 1100.19,120.17 1101.35,120.17 1102.51,120.17 1103.67,120.17 1104.84,120.17 1106.00,120.17 1107.16,120.17 1108.33,120.17 1109.49,120.17 1110.65,120.17 1111.81,120.17 1112.97,120.17 1114.14,120.17 1115.30,120.17 1116.46,120.17 1117.62,120.17 1118.79,120.17 1119.95,120.17 1121.11,120.17 1122.28,120.17 1123.44,120.17 1124.60,120.17 1125.76,120.17 1126.92,120.17 1128.09,120.17 1129.25,120.17 1130.41,120.17 1131.58,120.17 1132.74,120.17 1133.90,120.17 1135.06,120.17 1136.22,120.17 1137.39,120.17 1138.55,120.17 1139.71,120.17 1140.88,120.16 1142.04,120.16 1143.20,120.16 1144.36,120.15 1145.53,120.13 1146.69,120.11 1147.85,120.07 1149.01,120.01 1150.17,119.93 1151.34,119.80 1152.50,119.61 1153.66,119.34 1154.83,118.97 1155.99,118.47 1157.15,117.81 1158.31,116.96 1159.47,115.88 1160.64,114.56 1161.80,112.97 1162.96,111.12 1164.12,109.01 1165.29,106.68 1166.45,104.19 1167.61,101.61 1168.78,99.04 1169.94,96.59 1171.10,94.37 1172.26,92.51 1173.42,91.09 1174.59,90.21 1175.75,89.91 1176.91,90.21 1178.08,91.09 1179.24,92.51 1180.40,94.37 1181.56,96.59 1182.72,99.04 1183.89,101.61 1185.05,104.19 1186.21,106.68 1187.38,109.01 1188.54,111.12 1189.70,112.97 1190.86,114.56 1192.03,115.88 1193.19,116.96 1194.35,117.81 1195.51,118.47 1196.67,118.97 1197.84,119.34 1199.00,119.61 1200.16,119.80 1201.33,119.93 1202.49,120.01 1203.65,120.07 1204.81,120.11 1205.97,120.13 1207.14,120.15 1208.30,120.16 1209.46,120.16 1210.62,120.16 1211.79,120.17 1212.95,120.17 1214.11,120.17 1215.28,120.17 1216.44,120.17 1217.60,120.17 1218.76,120.17 1219.92,120.17 1221.09,120.17 1222.25,120.17 1223.41,120.17 1224.58,120.17 1225.74,120.17 1226.90,120.17 1228.06,120.17 1229.22,120.17 1230.39,120.17 1231.55,120.17 1232.71,120.17 1233.88,120.17 1235.04,120.17 1236.20,120.17 1237.36,120.17 1238.53,120.17 1239.69,120.17 1240.85,120.17 1242.01,120.17 1243.17,120.17 1244.34,120.17 1245.50,120.17 1246.66,120.17 1247.83,120.17 1248.99,120.17 1250.15,120.17 1251.31,120.17 1252.47,120.17 1253.64,120.17 1254.80,120.17 1255.96,120.17 1257.12,120.17 1258.29,120.17 1259.45,120.17 1260.61,120.17 1261.78,120.17 1262.94,120.17 1264.10,120.17 1265.26,120.17 1266.42,120.17 1267.59,120.17 1268.75,120.17 1269.91,120.17 1271.08,120.17 1272.24,120.17 1273.40,120.17 1274.56,120.17 1275.72,120.17 1276.89,120.17 1278.05,120.17 1279.21,120.17 1280.38,120.17 1281.54,120.17 1282.70,120.17 1283.86,120.17 1285.03,120.17" fill="none" stroke="#333" stroke-width="1.6"/>
<line x1="1059.50" y1="111.24" x2="1059.50" y2="129.69" stroke="#1f77b4" stroke-width="1.2"/>
<circle cx="1059.50" cy="120.46" r="1.6" fill="#1f77b4"/>
<line x1="1064.15" y1="131.31" x2="1064.15" y2="149.76" stroke="#1f77b4" stroke-width="1.2"/>
<circle cx="1064.15" cy="140.54" r="1.6" fill="#1f77b4"/>
<line x1="1068.80" y1="137.73" x2="1068.80" y2="156.18" stroke="#1f77b4" stroke-width="1.2"/>
<circle cx="1068.80" cy="146.96" r="1.6" fill="#1f77b4"/>
<line x1="1073.45" y1="122.82" x2="1073.45" y2="141.27" stroke="#1f77b4" stroke-width="1.2"/>
<circle cx="1073.45" cy="132.05" r="1.6" fill="#1f77b4"/>
<line x1="1078.10" y1="105.78" x2="1078.10" y2="124.23" stroke="#1f77b4" stroke-width="1.2"/>
<circle cx="1078.10" cy="115.00" r="1.6" fill="#1f77b4"/>
<line x1="1082.75" y1="101.35" x2="1082.75" y2="119.80" stroke="#1f77b4" stroke-width="1.2"/>
<circle cx="1082.75" cy="110.57" r="1.6" fill="#1f77b4"/>
<line x1="1087.40" y1="94.71" x2="1087.40" y2="113.16" stroke="#1f77b4" stroke-width="1.2"/>
<circle cx="1087.40" cy="103.93" r="1.6" fill="#1f77b4"/>
<line x1="1092.05" y1="93.97" x2="1092.05" y2="112.42" stroke="#1f77b4" stroke-width="1.2"/>
<circle cx="1092.05" cy="103.19" r="1.6" fill="#1f77b4"/>
<line x1="1096.70" y1="122.38" x2="1096.70" y2="140.83" stroke="#1f77b4" stroke-width="1.2"/>
<circle cx="1096.70" cy="131.61" r="1.6" fill="#1f77b4"/>
<line x1="1101.35" y1="89.91" x2="1101.35" y2="108.36" stroke="#1f77b4" stroke-width="1.2"/>
<circle cx="1101.35" cy="99.14" r="1.6" fill="#1f77b4"/>
<line x1="1106.00" y1="109.47" x2="1106.00" y2="127.92" stroke="#1f77b4" stroke-width="1.2"/>
<circle cx="1106.00" cy="118.69" r="1.6" fill="#1f77b4"/>
<line x1="1110.65" y1="125.70" x2="1110.65" y2="144.15" stroke="#1f77b4" stroke-width="1.2"/>
<circle cx="1110.65" cy="134.93" r="1.6" fill="#1f77b4"/>
<line x1="1115.30" y1="124.97" x2="1115.30" y2="143.42" stroke="#1f77b4" stroke-width="1.2"/>
<circle cx="1115.30" cy="134.19" r="1.6" fill="#1f77b4"/>
<line x1="1119.95" y1="103.56" x2="1119.95" y2="122.01" stroke="#1f77b4" stroke-width="1.2"/>
<circle cx="1119.95" cy="112.79" r="1.6" fill="#1f77b4"/>
<line x1="1124.60" y1="96.18" x2="1124.60" y2="114.63" stroke="#1f77b4" stroke-width="1.2"/>
<circle cx="1124.60" cy="105.41" r="1.6" fill="#1f77b4"/>
<line x1="1129.25" y1="110.94" x2="1129.25" y2="129.39" stroke="#1f77b4" stroke-width="1.2"/>
<circle cx="1129.25" cy="120.17" r="1.6" fill="#1f77b4"/>
<line x1="1133.90" y1="101.35" x2="1133.90" y2="119.80" stroke="#1f77b4" stroke-width="1.2"/>
<circle cx="1133.90" cy="110.57" r="1.6" fill="#1f77b4"/>
<line x1="1138.55" y1="106.15" x2="1138.55" y2="124.60" stroke="#1f77b4" stroke-width="1.2"/>
<circle cx="1138.55" cy="115.37" r="1.6" fill="#1f77b4"/>
<line x1="1143.20" y1="99.14" x2="1143.20" y2="117.59" stroke="#1f77b4" stroke-width="1.2"/>
<circle cx="1143.20" cy="108.36" r="1.6" fill="#1f77b4"/>
<line x1="1147.85" y1="115.74" x2="1147.85" y2="134.19" stroke="#1f77b4" stroke-width="1.2"/>
<circle cx="1147.85" cy="124.97" r="1.6" fill="#1f77b4"/>
<line x1="1152.50" y1="88.07" x2="1152.50" y2="106.52" stroke="#1f77b4" stroke-width="1.2"/>
<circle cx="1152.50" cy="97.29" r="1.6" fill="#1f77b4"/>
<line x1="1157.15" y1="99.14" x2="1157.15" y2="117.59" stroke="#1f77b4" stroke-width="1.2"/>
<circle cx="1157.15" cy="108.36" r="1.6" fill="#1f77b4"/>
<line x1="1161.80" y1="86.22" x2="1161.80" y2="104.67" stroke="#1f77b4" stroke-width="1.2"/>
<circle cx="1161.80" cy="95.45" r="1.6" fill="#1f77b4"/>
<line x1="1166.45" y1="90.28" x2="1166.45" y2="108.73" stroke="#1f77b4" stroke-width="1.2"/>
<circle cx="1166.45" cy="99.50" r="1.6" fill="#1f77b4"/>
<line x1="1171.10" y1="77.29" x2="1171.10" y2="95.74" stroke="#1f77b4" stroke-width="1.2"/>
<circle cx="1171.10" cy="86.52" r="1.6" fill="#1f77b4"/>
<line x1="1175.75" y1="66.66" x2="1175.75" y2="85.11" stroke="#1f77b4" stroke-width="1.2"/>
<circle cx="1175.75" cy="75.89" r="1.6" fill="#1f77b4"/>
<line x1="1180.40" y1="77.29" x2="1180.40" y2="95.74" stroke="#1f77b4" stroke-width="1.2"/>
<circle cx="1180.40" cy="86.52" r="1.6" fill="#1f77b4"/>
<line x1="1185.05" y1="79.50" x2="1185.05" y2="97.95" stroke="#1f77b4" stroke-width="1.2"/>
<circle cx="1185.05" cy="88.73" r="1.6" fill="#1f77b4"/>
<line x1="1189.70" y1="88.80" x2="1189.70" y2="107.25" stroke="#1f77b4" stroke-width="1.2"/>
<circle cx="1189.70" cy="98.03" r="1.6" fill="#1f77b4"/>
<line x1="1194.35" y1="111.68" x2="1194.35" y2="130.13" stroke="#1f77b4" stroke-width="1.2"/>
<circle cx="1194.35" cy="120.91" r="1.6" fill="#1f77b4"/>
<line x1="1199.00" y1="114.63" x2="1199.00" y2="133.08" stroke="#1f77b4" stroke-width="1.2"/>
<circle cx="1199.00" cy="123.86" r="1.6" fill="#1f77b4"/>
<line x1="1203.65" y1="105.78" x2="1203.65" y2="124.23" stroke="#1f77b4" stroke-width="1.2"/>
<circle cx="1203.65" cy="115.00" r="1.6" fill="#1f77b4"/>
<line x1="1208.30" y1="117.59" x2="1208.30" y2="136.04" stroke="#1f77b4" stroke-width="1.2"/>
<circle cx="1208.30" cy="126.81" r="1.6" fill="#1f77b4"/>
<line x1="1212.95" y1="107.25" x2="1212.95" y2="125.70" stroke="#1f77b4" stroke-width="1.2"/>
<circle cx="1212.95" cy="116.48" r="1.6" fill="#1f77b4"/>
<line x1="1217.60" y1="95.08" x2="1217.60" y2="113.53" stroke="#1f77b4" stroke-width="1.2"/>
<circle cx="1217.60" cy="104.30" r="1.6" fill="#1f77b4"/>
<line x1="1222.25" y1="104.30" x2="1222.25" y2="122.75" stroke="#1f77b4" stroke-width="1.2"/>
<circle cx="1222.25" cy="113.53" r="1.6" fill="#1f77b4"/>
<line x1="1226.90" y1="72.57" x2="1226.90" y2="91.02" stroke="#1f77b4" stroke-width="1.2"/>
<circle cx="1226.90" cy="81.79" r="1.6" fill="#1f77b4"/>
<line x1="1231.55" y1="86.59" x2="1231.55" y2="105.04" stroke="#1f77b4" stroke-width="1.2"/>
<circle cx="1231.55" cy="95.81" r="1.6" fill="#1f77b4"/>
<line x1="1236.20" y1="86.59" x2="1236.20" y2="105.04" stroke="#1f77b4" stroke-width="1.2"/>
<circle cx="1236.20" cy="95.81" r="1.6" fill="#1f77b4"/>
<line x1="1240.85" y1="89.91" x2="1240.85" y2="108.36" stroke="#1f77b4" stroke-width="1.2"/>
<circle cx="1240.85" cy="99.14" r="1.6" fill="#1f77b4"/>
<line x1="1245.50" y1="86.59" x2="1245.50" y2="105.04" stroke="#1f77b4" stroke-width="1.2"/>
<circle cx="1245.50" cy="95.81" r="1.6" fill="#1f77b4"/>
<line x1="1250.15" y1="82.90" x2="1250.15" y2="101.35" stroke="#1f77b4" stroke-width="1.2"/>
<circle cx="1250.15" cy="92.12" r="1.6" fill="#1f77b4"/>
<line x1="1254.80" y1="88.07" x2="1254.80" y2="106.52" stroke="#1f77b4" stroke-width="1.2"/>
<circle cx="1254.80" cy="97.29" r="1.6" fill="#1f77b4"/>
<line x1="1259.45" y1="97.66" x2="1259.45" y2="116.11" stroke="#1f77b4" stroke-width="1.2"/>
<circle cx="1259.45" cy="106.88" r="1.6" fill="#1f77b4"/>
<line x1="1264.10" y1="91.76" x2="1264.10" y2="110.21" stroke="#1f77b4" stroke-width="1.2"/>
<circle cx="1264.10" cy="100.98" r="1.6" fill="#1f77b4"/>
<line x1="1268.75" y1="118.32" x2="1268.75" y2="136.77" stroke="#1f77b4" stroke-width="1.2"/>
<circle cx="1268.75" cy="127.55" r="1.6" fill="#1f77b4"/>
<line x1="1273.40" y1="109.47" x2="1273.40" y2="127.92" stroke="#1f77b4" stroke-width="1.2"/>
<circle cx="1273.40" cy="118.69" r="1.6" fill="#1f77b4"/>
<line x1="1278.05" y1="92.49" x2="1278.05" y2="110.94" stroke="#1f77b4" stroke-width="1.2"/>
<circle cx="1278.05" cy="101.72" r="1.6" fill="#1f77b4"/>
<line x1="1282.70" y1="82.16" x2="1282.70" y2="100.61" stroke="#1f77b4" stroke-width="1.2"/>
<circle cx="1282.70" cy="91.39" r="1.6" fill="#1f77b4"/>
<line x1="1287.35" y1="93.23" x2="1287.35" y2="111.68" stroke="#1f77b4" stroke-width="1.2"/>
<circle cx="1287.35" cy="102.46" r="1.6" fill="#1f77b4"/>
<rect x="101.6" y="348.4" width="1197.8000000000002" height="84.40000000000003" fill="#fff"/>
<clipPath id="axclip"><rect x="101.6" y="348.4" width="1197.8000000000002" height="84.40000000000003"/></clipPath>
<g clip-path="url(#axclip)">
<rect x="433.2" y="348.4" width="55.30000000000001" height="84.40000000000003" fill="#c4c400"/>
<polygon points="109.0,414.5 111.0,414.4 113.0,414.3 115.0,414.1 117.0,414.5 119.0,414.3 121.0,415.8 123.0,415.1 125.0,414.4 127.0,414.9 129.0,414.5 131.0,415.9 133.0,415.3 135.0,415.8 137.0,415.3 139.0,415.3 141.0,416.3 143.0,416.0 145.0,415.9 147.0,414.9 149.0,415.2 151.0,416.3 153.0,415.2 155.0,416.4 157.0,415.6 159.0,416.5 161.0,416.8 163.0,415.3 165.0,416.5 167.0,416.5 169.0,415.3 171.0,415.5 173.0,416.5 175.0,415.4 177.0,416.2 179.0,416.0 181.0,416.8 183.0,415.6 185.0,416.0 187.0,415.6 189.0,415.7 191.0,416.8 193.0,416.7 195.0,417.1 197.0,417.1 199.0,417.3 201.0,416.9 203.0,416.4 205.0,417.5 207.0,416.4 209.0,417.0 211.0,417.0 213.0,416.2 215.0,416.8 217.0,417.1 219.0,416.9 221.0,416.5 223.0,417.6 225.0,416.1 227.0,417.8 229.0,416.5 231.0,416.4 233.0,417.8 235.0,416.6 237.0,417.3 239.0,417.0 241.0,418.0 243.0,417.9 245.0,417.7 247.0,416.5 249.0,417.8 251.0,416.9 253.0,416.6 255.0,416.6 257.0,417.6 259.0,417.6 261.0,417.4 263.0,417.0 265.0,418.2 267.0,417.1 269.0,417.0 271.0,417.0 273.0,418.4 275.0,416.9 277.0,418.4 279.0,418.0 281.0,417.5 283.0,417.0 285.0,418.0 287.0,417.1 289.0,417.8 291.0,418.2 293.0,418.2 295.0,418.5 297.0,418.7 299.0,418.6 301.0,417.7 303.0,417.2 305.0,418.6 307.0,418.9 309.0,417.3 311.0,418.1 313.0,418.3 315.0,418.6 317.0,418.1 319.0,417.7 321.0,418.4 323.0,418.4 325.0,419.1 327.0,417.7 329.0,419.2 331.0,418.4 333.0,417.9 335.0,419.1 337.0,418.1 339.0,417.8 341.0,418.3 343.0,418.1 345.0,419.3 347.0,418.8 349.0,419.3 351.0,418.1 353.0,419.1 355.0,418.8 357.0,418.0 359.0,418.2 361.0,418.0 363.0,419.0 365.0,418.9 367.0,418.6 369.0,419.0 371.0,419.4 373.0,419.2 375.0,419.7 377.0,419.3 379.0,418.3 381.0,418.4 383.0,419.0 385.0,419.2 387.0,419.5 389.0,420.0 391.0,419.7 393.0,418.8 395.0,418.7 397.0,419.6 399.0,418.9 401.0,419.0 403.0,419.1 405.0,419.2 407.0,419.1 409.0,419.8 411.0,419.2 413.0,419.9 415.0,419.6 417.0,419.1 419.0,419.2 421.0,419.9 423.0,418.8 425.0,419.3 427.0,419.4 429.0,420.4 431.0,419.5 433.0,420.0 435.0,419.3 437.0,419.7 439.0,419.1 441.0,419.4 443.0,419.1 445.0,419.9 447.0,419.4 449.0,419.2 451.0,419.1 453.0,419.9 455.0,419.1 457.0,419.0 459.0,419.3 461.0,418.9 463.0,418.9 465.0,419.7 467.0,419.6 469.0,420.3 471.0,419.1 473.0,419.0 475.0,419.8 477.0,419.4 479.0,419.4 481.0,419.3 483.0,420.3 485.0,419.3 487.0,419.6 489.0,419.5 491.0,419.9 493.0,419.6 495.0,419.3 497.0,419.5 499.0,419.4 501.0,420.6 503.0,420.4 505.0,419.9 507.0,419.5 509.0,420.3 511.0,419.5 513.0,419.6 515.0,420.6 517.0,419.9 519.0,420.3 521.0,420.6 523.0,420.5 525.0,420.2 527.0,420.4 529.0,420.4 531.0,420.7 533.0,419.9 535.0,420.1 537.0,419.7 539.0,419.7 541.0,420.3 543.0,419.2 545.0,420.8 547.0,420.1 549.0,420.3 551.0,420.1 553.0,420.6 555.0,419.4 557.0,420.2 559.0,420.7 561.0,419.8 563.0,420.6 565.0,419.9 567.0,420.2 569.0,419.8 571.0,419.2 573.0,419.5 575.0,420.1 577.0,419.5 579.0,419.8 581.0,420.2 583.0,420.6 585.0,419.9 587.0,419.9 589.0,419.3 591.0,419.2 593.0,419.9 595.0,420.3 597.0,419.4 599.0,420.9 601.0,420.7 603.0,420.0 605.0,419.9 607.0,420.7 609.0,419.9 611.0,419.4 613.0,420.3 615.0,420.2 617.0,420.6 619.0,420.5 621.0,419.3 623.0,420.3 625.0,419.4 627.0,419.4 629.0,420.0 631.0,420.6 633.0,419.3 635.0,420.2 637.0,420.3 639.0,420.5 641.0,419.4 643.0,420.2 645.0,420.6 647.0,420.2 649.0,420.8 651.0,420.0 653.0,420.3 655.0,420.6 657.0,419.8 659.0,419.7 661.0,421.1 663.0,420.2 665.0,420.6 667.0,419.5 669.0,419.8 671.0,420.7 673.0,420.7 675.0,420.9 677.0,419.5 679.0,420.6 681.0,420.1 683.0,420.3 685.0,420.1 687.0,420.1 689.0,419.9 691.0,421.0 693.0,419.9 695.0,420.7 697.0,420.3 699.0,420.6 701.0,420.7 703.0,420.3 705.0,420.4 707.0,420.6 709.0,420.0 711.0,420.2 713.0,421.2 715.0,420.8 717.0,420.5 719.0,419.7 721.0,419.8 723.0,420.3 725.0,421.2 727.0,420.0 729.0,420.6 731.0,420.3 733.0,420.1 735.0,420.2 737.0,420.5 739.0,419.8 741.0,420.7 743.0,420.7 745.0,419.9 747.0,421.0 749.0,420.8 751.0,419.9 753.0,421.2 755.0,419.9 757.0,420.2 759.0,420.6 761.0,420.9 763.0,420.1 765.0,419.8 767.0,421.2 769.0,420.6 771.0,420.5 773.0,420.6 775.0,420.9 777.0,421.2 779.0,420.4 781.0,420.1 783.0,421.3 785.0,421.1 787.0,420.1 789.0,420.1 791.0,420.3 793.0,421.4 795.0,420.2 797.0,419.8 799.0,419.8 801.0,420.3 803.0,421.4 805.0,420.1 807.0,421.1 809.0,420.4 811.0,419.9 813.0,420.3 815.0,421.3 817.0,421.0 819.0,420.0 821.0,421.3 823.0,420.5 825.0,420.9 827.0,421.3 829.0,420.5 831.0,421.5 833.0,421.4 835.0,420.9 837.0,421.5 839.0,421.5 841.0,420.6 843.0,420.4 845.0,420.1 847.0,421.4 849.0,420.9 851.0,421.1 853.0,420.6 855.0,420.8 857.0,420.1 859.0,421.0 861.0,421.6 863.0,420.5 865.0,421.4 867.0,420.6 869.0,420.8 871.0,420.1 873.0,420.8 875.0,420.6 877.0,421.3 879.0,420.8 881.0,421.3 883.0,420.5 885.0,420.9 887.0,421.5 889.0,421.3 891.0,421.1 893.0,420.5 895.0,421.5 897.0,420.6 899.0,420.7 901.0,421.6 903.0,420.6 905.0,421.6 907.0,421.6 909.0,420.8 911.0,421.4 913.0,420.3 915.0,421.0 917.0,421.3 919.0,420.5 921.0,421.8 923.0,420.6 925.0,421.8 927.0,421.6 929.0,420.2 931.0,420.7 933.0,421.5 935.0,421.7 937.0,420.2 939.0,420.8 941.0,420.5 943.0,421.7 945.0,420.8 947.0,421.3 949.0,421.5 951.0,421.4 953.0,420.9 955.0,421.3 957.0,421.3 959.0,421.7 961.0,420.5 963.0,420.9 965.0,420.6 967.0,421.2 969.0,420.5 971.0,421.1 973.0,421.0 975.0,421.0 977.0,420.7 979.0,421.3 981.0,421.8 983.0,422.0 985.0,421.7 987.0,422.0 989.0,420.5 991.0,421.2 993.0,420.7 995.0,422.0 997.0,421.3 999.0,420.5 1001.0,421.0 1003.0,421.3 1005.0,421.3 1007.0,421.9 1009.0,421.8 1011.0,421.8 1013.0,421.5 1015.0,421.4 1017.0,420.6 1019.0,421.9 1021.0,421.7 1023.0,421.7 1025.0,421.9 1027.0,421.6 1029.0,421.7 1031.0,421.3 1033.0,422.1 1035.0,420.6 1037.0,421.5 1039.0,420.6 1041.0,421.0 1043.0,421.0 1045.0,421.4 1047.0,420.6 1049.0,422.0 1051.0,421.1 1053.0,421.7 1055.0,421.1 1057.0,421.0 1059.0,421.9 1061.0,421.9 1063.0,422.2 1065.0,421.9 1067.0,422.1 1069.0,421.6 1071.0,420.6 1073.0,421.6 1075.0,421.7 1077.0,421.5 1079.0,421.8 1081.0,421.0 1083.0,421.1 1085.0,422.0 1087.0,421.9 1089.0,421.2 1091.0,420.7 1093.0,421.2 1095.0,421.6 1097.0,420.7 1099.0,422.3 1101.0,422.2 1103.0,421.0 1105.0,421.7 1107.0,422.3 1109.0,421.4 1111.0,420.7 1113.0,421.5 1115.0,421.8 1117.0,422.2 1119.0,422.3 1121.0,420.9 1123.0,421.6 1125.0,420.8 1127.0,422.3 1129.0,422.0 1131.0,422.3 1133.0,421.8 1135.0,422.3 1137.0,422.0 1139.0,421.8 1141.0,421.9 1143.0,422.4 1145.0,422.4 1147.0,420.8 1149.0,422.2 1151.0,421.6 1153.0,421.8 1155.0,421.6 1157.0,422.4 1159.0,422.0 1161.0,422.3 1163.0,421.6 1165.0,421.0 1167.0,421.5 1169.0,421.1 1171.0,422.2 1173.0,422.5 1175.0,421.6 1177.0,421.7 1179.0,421.6 1181.0,421.9 1183.0,421.5 1185.0,421.4 1187.0,421.0 1189.0,422.1 1191.0,421.8 1193.0,421.2 1195.0,422.2 1197.0,422.4 1199.0,422.1 1201.0,422.5 1203.0,421.3 1205.0,421.3 1207.0,422.1 1209.0,422.4 1211.0,422.5 1213.0,422.2 1215.0,422.5 1217.0,421.9 1219.0,421.7 1221.0,422.3 1223.0,422.6 1225.0,421.5 1227.0,422.6 1229.0,422.4 1231.0,422.2 1233.0,422.1 1235.0,422.6 1237.0,422.0 1239.0,422.2 1241.0,421.5 1243.0,421.8 1245.0,421.2 1247.0,421.7 1249.0,421.5 1251.0,421.8 1253.0,422.0 1255.0,421.4 1257.0,421.7 1259.0,421.2 1261.0,421.6 1263.0,421.6 1265.0,422.4 1267.0,421.4 1269.0,422.2 1271.0,422.6 1273.0,422.7 1275.0,422.6 1277.0,422.4 1279.0,421.7 1281.0,422.4 1283.0,422.8 1285.0,421.6 1287.0,421.9 1289.0,422.8 1291.0,422.8 1293.0,422.7 1295.0,422.3 1297.0,421.4 1299.0,421.3 1299.4,426.3 109,426.3" fill="#9c9c9c" fill-opacity="0.6"/>
<rect x="109" y="427.3" width="1190.4" height="3.599999999999966" fill="#a0a0a0" fill-opacity="0.55"/>
<line x1="101.6" y1="426.3" x2="1299.4" y2="426.3" stroke="#404040" stroke-opacity="0.55" stroke-width="1.8"/>
<rect x="131.4" y="348.4" width="12.400000000000006" height="84.40000000000003" fill="#8c8c8c" fill-opacity="0.75" stroke="#333" stroke-width="0.9"/>
<line x1="131.4" y1="366.4" x2="143.8" y2="355.23999999999995" stroke="#222" stroke-width="0.8"/>
<line x1="131.4" y1="389.4" x2="143.8" y2="378.23999999999995" stroke="#222" stroke-width="0.8"/>
<line x1="131.4" y1="412.4" x2="143.8" y2="401.23999999999995" stroke="#222" stroke-width="0.8"/>
<line x1="131.4" y1="435.4" x2="143.8" y2="424.23999999999995" stroke="#222" stroke-width="0.8"/>
<line x1="131.4" y1="458.4" x2="143.8" y2="447.23999999999995" stroke="#222" stroke-width="0.8"/>
<line x1="131.4" y1="481.4" x2="143.8" y2="470.23999999999995" stroke="#222" stroke-width="0.8"/>
<rect x="1273.3" y="348.4" width="6.400000000000091" height="84.40000000000003" fill="#8c8c8c" fill-opacity="0.75" stroke="#333" stroke-width="0.9"/>
<line x1="1273.3" y1="366.4" x2="1279.7" y2="360.6399999999999" stroke="#222" stroke-width="0.8"/>
<line x1="1273.3" y1="389.4" x2="1279.7" y2="383.6399999999999" stroke="#222" stroke-width="0.8"/>
<line x1="1273.3" y1="412.4" x2="1279.7" y2="406.6399999999999" stroke="#222" stroke-width="0.8"/>
<line x1="1273.3" y1="435.4" x2="1279.7" y2="429.6399999999999" stroke="#222" stroke-width="0.8"/>
<line x1="1273.3" y1="458.4" x2="1279.7" y2="452.6399999999999" stroke="#222" stroke-width="0.8"/>
<line x1="1273.3" y1="481.4" x2="1279.7" y2="475.6399999999999" stroke="#222" stroke-width="0.8"/>
<line x1="279.1" y1="348.4" x2="279.1" y2="432.8" stroke="#555" stroke-width="1.2" stroke-dasharray="4,2.5"/>
<line x1="320.3" y1="348.4" x2="320.3" y2="432.8" stroke="#555" stroke-width="1.2" stroke-dasharray="4,2.5"/>
<line x1="356.5" y1="348.4" x2="356.5" y2="432.8" stroke="#555" stroke-width="1.2" stroke-dasharray="4,2.5"/>
<line x1="414.6" y1="348.4" x2="414.6" y2="432.8" stroke="#555" stroke-width="1.2" stroke-dasharray="4,2.5"/>
<line x1="706.9" y1="348.4" x2="706.9" y2="432.8" stroke="#555" stroke-width="1.2" stroke-dasharray="4,2.5"/>
<line x1="1144.6" y1="348.4" x2="1144.6" y2="432.8" stroke="#555" stroke-width="1.2" stroke-dasharray="4,2.5"/>
<line x1="1186" y1="348.4" x2="1186" y2="432.8" stroke="#555" stroke-width="1.2" stroke-dasharray="4,2.5"/>
<line x1="461.5" y1="348.4" x2="461.5" y2="432.8" stroke="#222" stroke-width="1.1" stroke-dasharray="2.2,1.4"/>
<polyline points="101.4,402.9 105.4,400.0 106.9,427.1 108.9,388.6 110.7,392.9 113.9,385.7 115.7,411.4 117.9,405.7 119.3,410.0 121.1,417.1 122.9,407.1 124.6,412.9 126.9,400.0 128.6,414.3 131.1,398.6 133.1,386.4 135.0,391.4 136.9,387.1 138.6,394.3 140.7,390.0 142.9,400.0 145.7,396.4 148.3,410.0 151.1,404.3 153.6,408.6 156.4,414.3 158.6,417.9 160.7,411.4 162.9,400.0 165.0,407.1 167.1,402.9 168.6,397.1 170.7,401.4 172.1,398.6 173.6,405.7 175.7,420.0 178.3,398.6 180.0,404.3 182.1,410.0 184.3,392.9 185.7,405.7 188.6,402.9 191.4,400.0 192.9,395.7 194.3,402.9 195.7,410.0 197.1,400.0 199.3,412.9 200.7,397.1 202.9,379.3 205.0,395.7 207.1,388.6 208.6,394.3 209.7,388.6 211.1,385.0 212.9,402.9 214.3,394.3 215.7,398.6 217.9,404.3 220.0,388.6 221.7,408.6 223.6,390.0 225.7,385.7 227.9,398.6 229.3,394.3 231.4,402.9 233.6,407.1 235.0,400.0 237.9,394.3 240.0,412.9 242.1,408.6 244.3,414.3 246.0,402.9 247.9,411.4 250.0,411.4 252.1,411.4 254.3,401.4 256.4,417.1 257.9,425.7 260.0,408.6 262.1,405.7 264.3,405.7 266.4,404.3 268.6,400.0 270.7,397.1 272.9,391.4 274.6,398.6 277.1,392.9 279.3,384.3 281.1,402.9 282.9,396.4 285.0,401.4 287.1,408.6 289.3,394.3 292.1,390.7 294.3,395.7 296.4,402.9 298.6,410.7 300.0,407.1 302.9,414.3 306.4,418.6 308.9,405.7 311.1,413.6 314.3,394.3 317.1,401.4 319.7,393.6 321.4,410.0 323.6,407.1 326.4,396.4 330.0,397.9 332.1,400.0 334.3,407.1 336.9,400.7 338.9,410.0 341.7,401.4 344.6,398.6 347.1,406.4 350.0,402.9 353.6,397.1 356.4,387.9 358.6,402.9 361.1,415.0 363.6,403.6 365.7,420.7 368.6,408.6 371.1,414.3 374.3,406.4 376.0,407.1 377.9,392.1 380.0,398.6 382.6,402.9 385.0,415.7 388.6,421.4 391.4,407.1 394.3,395.7 396.4,390.0 398.6,388.6 400.4,381.4 401.7,394.3 403.6,387.1 406.0,392.9 408.3,389.3 410.7,389.3 412.9,387.1 414.7,375.7 416.4,380.0 418.3,380.7 420.0,387.1 422.1,385.0 424.3,382.9 426.9,394.3 429.3,374.3 431.4,387.1 434.0,398.6 436.4,382.9 439.3,378.6 440.7,391.4 442.6,378.6 444.6,394.3 446.4,387.1 447.9,381.4 450.0,387.1 452.1,382.9 454.0,389.3 455.7,377.9 457.9,377.1 461.1,367.9 463.6,375.7 466.0,388.6 468.3,385.7 470.0,390.0 471.7,382.9 474.0,370.0 476.0,377.1 478.6,375.7 480.7,377.1 483.6,382.1 485.4,390.0 488.3,374.3 491.1,387.1 493.6,385.7 495.7,377.9 497.9,382.9 500.0,378.6 501.7,382.9 504.3,375.0 507.1,385.7 510.0,386.4 513.6,374.3 515.7,387.1 518.6,378.6 521.4,372.1 524.6,387.1 527.9,382.9 530.7,378.6 533.1,377.1 535.4,377.9 537.1,382.9 540.7,405.7 542.9,394.3 545.7,381.4 548.6,382.9 551.1,378.6 553.1,381.4 555.7,394.3 559.3,377.9 561.7,386.4 564.3,377.1 568.3,393.6 572.1,385.7 575.7,378.6 578.6,388.6 580.7,388.6 582.6,382.1 584.3,391.4 587.1,394.3 589.7,395.7 592.1,380.0 595.0,370.0 597.1,375.0 600.0,390.0 602.6,375.7 605.0,367.9 608.6,379.3 611.1,373.6 613.6,374.3 615.7,382.9 618.6,368.6 621.4,367.9 624.3,371.4 627.1,375.7 629.3,372.9 631.4,379.3 634.3,389.3 636.4,387.9 639.3,367.1 642.9,380.0 645.0,371.4 647.9,390.0 650.0,375.0 652.1,371.4 653.6,376.4 656.4,364.3 659.3,376.4 662.1,375.0 665.7,380.0 668.6,377.9 671.4,376.4 673.6,366.4 677.1,382.9 679.3,377.1 681.1,378.6 683.6,367.1 687.1,370.7 690.0,367.9 692.1,368.6 694.3,369.3 696.9,364.3 700.0,365.7 702.1,372.9 705.0,358.6 707.1,352.1 709.3,367.1 711.4,363.6 713.1,369.3 714.3,360.7 717.1,365.0 720.0,372.1 722.6,377.9 725.0,373.6 727.1,367.1 729.3,370.7 730.7,365.7 733.6,370.0 737.4,361.4 740.3,368.6 742.9,362.1 746.0,358.6 749.3,365.0 751.4,368.6 753.6,373.6 755.7,365.0 758.6,367.1 760.7,363.6 763.6,364.3 765.7,361.4 768.6,362.1 771.4,361.4 774.3,360.0 777.1,362.1 778.6,357.9 780.7,363.6 782.1,357.9 784.3,365.0 785.7,360.0 787.9,357.9 790.7,369.3 794.3,365.0 797.4,360.7 800.0,363.6 802.9,367.1 805.0,364.3 807.1,366.4 808.6,357.9 810.7,367.9 814.3,367.1 816.0,360.7 818.6,358.6 821.4,365.0 824.0,374.3 826.4,365.0 828.6,366.4 830.7,367.9 834.3,361.4 836.4,369.3 839.3,367.9 842.9,366.4 845.0,362.9 847.1,357.1 850.0,367.9 852.1,360.7 855.4,370.7 857.1,362.9 859.7,359.3 862.9,366.4 865.7,365.0 868.6,362.1 871.4,366.4 873.6,370.7 875.7,366.4 878.6,365.0 881.4,362.9 884.3,365.7 887.1,362.1 891.4,360.7 895.0,370.7 897.9,367.9 900.0,365.7 902.9,366.4 904.3,372.9 906.4,363.6 908.3,370.0 910.7,362.9 912.9,358.6 915.0,362.9 917.9,372.9 920.0,370.0 921.4,368.6 922.9,365.0 925.0,377.1 927.1,363.6 929.3,360.7 931.7,357.9 934.3,371.4 937.1,369.3 940.3,358.6 942.9,362.9 945.7,363.6 947.9,369.3 950.0,363.6 953.1,376.4 955.7,367.1 957.9,365.7 960.3,357.9 962.9,373.6 965.0,367.1 967.1,365.0 970.0,358.6 972.1,366.4 974.3,372.1 977.1,370.0 980.0,364.3 982.6,361.4 985.0,359.3 988.6,371.4 991.4,372.1 994.3,366.4 997.1,367.1 1000.0,365.7 1002.9,364.3 1005.0,367.9 1006.9,366.4 1008.6,368.6 1011.4,375.0 1012.9,363.6 1015.0,375.7 1017.1,369.3 1020.7,368.6 1022.9,374.3 1025.4,380.0 1027.9,371.4 1031.4,369.3 1035.7,365.0 1037.9,367.1 1040.7,375.0 1042.9,368.6 1045.0,367.1 1047.1,363.6 1048.6,380.7 1050.7,367.9 1052.9,372.9 1055.7,371.4 1058.6,363.6 1061.4,373.6 1064.0,371.4 1066.4,370.0 1068.6,368.6 1072.1,370.7 1075.0,375.7 1077.1,368.6 1080.0,366.4 1083.6,382.1 1086.4,372.9 1089.3,376.4 1092.1,372.9 1094.3,370.0 1096.4,367.9 1098.6,375.7 1100.0,382.9 1102.9,395.7 1106.4,374.3 1110.0,392.9 1113.6,371.4 1115.7,370.0 1117.9,373.6 1120.7,369.3 1124.3,384.3 1127.9,367.1 1130.7,364.3 1132.9,356.4 1135.4,369.3 1137.9,365.7 1139.7,363.6 1141.4,369.3 1144.3,357.9 1147.1,360.7 1150.3,369.3 1154.3,365.0 1157.1,373.6 1160.0,381.4 1162.9,375.0 1166.0,360.7 1168.6,366.4 1170.7,367.9 1173.6,360.0 1176.4,365.7 1179.3,372.1 1182.6,354.3 1184.3,360.0 1185.7,354.3 1187.9,358.6 1190.0,361.4 1192.9,370.0 1195.7,374.3 1199.3,357.9 1202.1,366.4 1205.0,365.0 1207.1,368.6 1209.3,362.9 1212.1,357.9 1214.3,361.4 1217.1,360.7 1219.3,365.0 1221.4,372.9 1224.3,361.4 1227.1,365.0 1230.3,357.9 1232.9,365.0 1235.0,370.0 1237.9,363.6 1241.4,372.1 1244.3,365.0 1247.1,366.4 1250.3,357.9 1253.6,365.0 1256.4,367.9 1259.3,367.1 1262.9,360.7 1266.4,372.1 1270.0,358.6 1273.6,365.0 1276.4,370.7 1279.3,356.4 1281.4,362.1 1284.3,365.0 1286.4,360.0 1289.3,362.9 1291.4,360.0 1294.3,366.4 1297.1,365.0 1299.3,362.9" fill="none" stroke="#0000ff" stroke-width="1.25" stroke-linejoin="round"/>
</g>
<rect x="101.6" y="348.4" width="1197.8000000000002" height="84.40000000000003" fill="none" stroke="#333" stroke-width="1.1"/>
<line x1="110.4" y1="432.8" x2="110.4" y2="436.3" stroke="#333" stroke-width="0.8"/>
<text transform="translate(110.4,447.8) scale(1.1,1.06)" font-family='"Liberation Sans", sans-serif' font-size="10" fill="#222" text-anchor="middle"  stroke="#222" stroke-width="0.18">3500</text>
<line x1="169.8" y1="432.8" x2="169.8" y2="436.3" stroke="#333" stroke-width="0.8"/>
<text transform="translate(169.845,447.8) scale(1.1,1.06)" font-family='"Liberation Sans", sans-serif' font-size="10" fill="#222" text-anchor="middle"  stroke="#222" stroke-width="0.18">3600</text>
<line x1="229.3" y1="432.8" x2="229.3" y2="436.3" stroke="#333" stroke-width="0.8"/>
<text transform="translate(229.29000000000002,447.8) scale(1.1,1.06)" font-family='"Liberation Sans", sans-serif' font-size="10" fill="#222" text-anchor="middle"  stroke="#222" stroke-width="0.18">3700</text>
<line x1="288.7" y1="432.8" x2="288.7" y2="436.3" stroke="#333" stroke-width="0.8"/>
<text transform="translate(288.735,447.8) scale(1.1,1.06)" font-family='"Liberation Sans", sans-serif' font-size="10" fill="#222" text-anchor="middle"  stroke="#222" stroke-width="0.18">3800</text>
<line x1="348.2" y1="432.8" x2="348.2" y2="436.3" stroke="#333" stroke-width="0.8"/>
<text transform="translate(348.18,447.8) scale(1.1,1.06)" font-family='"Liberation Sans", sans-serif' font-size="10" fill="#222" text-anchor="middle"  stroke="#222" stroke-width="0.18">3900</text>
<line x1="407.6" y1="432.8" x2="407.6" y2="436.3" stroke="#333" stroke-width="0.8"/>
<text transform="translate(407.625,447.8) scale(1.1,1.06)" font-family='"Liberation Sans", sans-serif' font-size="10" fill="#222" text-anchor="middle"  stroke="#222" stroke-width="0.18">4000</text>
<line x1="467.1" y1="432.8" x2="467.1" y2="436.3" stroke="#333" stroke-width="0.8"/>
<text transform="translate(467.07000000000005,447.8) scale(1.1,1.06)" font-family='"Liberation Sans", sans-serif' font-size="10" fill="#222" text-anchor="middle"  stroke="#222" stroke-width="0.18">4100</text>
<line x1="526.5" y1="432.8" x2="526.5" y2="436.3" stroke="#333" stroke-width="0.8"/>
<text transform="translate(526.515,447.8) scale(1.1,1.06)" font-family='"Liberation Sans", sans-serif' font-size="10" fill="#222" text-anchor="middle"  stroke="#222" stroke-width="0.18">4200</text>
<line x1="586.0" y1="432.8" x2="586.0" y2="436.3" stroke="#333" stroke-width="0.8"/>
<text transform="translate(585.96,447.8) scale(1.1,1.06)" font-family='"Liberation Sans", sans-serif' font-size="10" fill="#222" text-anchor="middle"  stroke="#222" stroke-width="0.18">4300</text>
<line x1="645.4" y1="432.8" x2="645.4" y2="436.3" stroke="#333" stroke-width="0.8"/>
<text transform="translate(645.405,447.8) scale(1.1,1.06)" font-family='"Liberation Sans", sans-serif' font-size="10" fill="#222" text-anchor="middle"  stroke="#222" stroke-width="0.18">4400</text>
<line x1="704.9" y1="432.8" x2="704.9" y2="436.3" stroke="#333" stroke-width="0.8"/>
<text transform="translate(704.85,447.8) scale(1.1,1.06)" font-family='"Liberation Sans", sans-serif' font-size="10" fill="#222" text-anchor="middle"  stroke="#222" stroke-width="0.18">4500</text>
<line x1="764.3" y1="432.8" x2="764.3" y2="436.3" stroke="#333" stroke-width="0.8"/>
<text transform="translate(764.295,447.8) scale(1.1,1.06)" font-family='"Liberation Sans", sans-serif' font-size="10" fill="#222" text-anchor="middle"  stroke="#222" stroke-width="0.18">4600</text>
<line x1="823.7" y1="432.8" x2="823.7" y2="436.3" stroke="#333" stroke-width="0.8"/>
<text transform="translate(823.74,447.8) scale(1.1,1.06)" font-family='"Liberation Sans", sans-serif' font-size="10" fill="#222" text-anchor="middle"  stroke="#222" stroke-width="0.18">4700</text>
<line x1="883.2" y1="432.8" x2="883.2" y2="436.3" stroke="#333" stroke-width="0.8"/>
<text transform="translate(883.1850000000001,447.8) scale(1.1,1.06)" font-family='"Liberation Sans", sans-serif' font-size="10" fill="#222" text-anchor="middle"  stroke="#222" stroke-width="0.18">4800</text>
<line x1="942.6" y1="432.8" x2="942.6" y2="436.3" stroke="#333" stroke-width="0.8"/>
<text transform="translate(942.63,447.8) scale(1.1,1.06)" font-family='"Liberation Sans", sans-serif' font-size="10" fill="#222" text-anchor="middle"  stroke="#222" stroke-width="0.18">4900</text>
<line x1="1002.1" y1="432.8" x2="1002.1" y2="436.3" stroke="#333" stroke-width="0.8"/>
<text transform="translate(1002.075,447.8) scale(1.1,1.06)" font-family='"Liberation Sans", sans-serif' font-size="10" fill="#222" text-anchor="middle"  stroke="#222" stroke-width="0.18">5000</text>
<line x1="1061.5" y1="432.8" x2="1061.5" y2="436.3" stroke="#333" stroke-width="0.8"/>
<text transform="translate(1061.52,447.8) scale(1.1,1.06)" font-family='"Liberation Sans", sans-serif' font-size="10" fill="#222" text-anchor="middle"  stroke="#222" stroke-width="0.18">5100</text>
<line x1="1121.0" y1="432.8" x2="1121.0" y2="436.3" stroke="#333" stroke-width="0.8"/>
<text transform="translate(1120.9650000000001,447.8) scale(1.1,1.06)" font-family='"Liberation Sans", sans-serif' font-size="10" fill="#222" text-anchor="middle"  stroke="#222" stroke-width="0.18">5200</text>
<line x1="1180.4" y1="432.8" x2="1180.4" y2="436.3" stroke="#333" stroke-width="0.8"/>
<text transform="translate(1180.41,447.8) scale(1.1,1.06)" font-family='"Liberation Sans", sans-serif' font-size="10" fill="#222" text-anchor="middle"  stroke="#222" stroke-width="0.18">5300</text>
<line x1="1239.9" y1="432.8" x2="1239.9" y2="436.3" stroke="#333" stroke-width="0.8"/>
<text transform="translate(1239.8550000000002,447.8) scale(1.1,1.06)" font-family='"Liberation Sans", sans-serif' font-size="10" fill="#222" text-anchor="middle"  stroke="#222" stroke-width="0.18">5400</text>
<line x1="1299.3" y1="432.8" x2="1299.3" y2="436.3" stroke="#333" stroke-width="0.8"/>
<text transform="translate(1299.3000000000002,447.8) scale(1.1,1.06)" font-family='"Liberation Sans", sans-serif' font-size="10" fill="#222" text-anchor="middle"  stroke="#222" stroke-width="0.18">5500</text>
<line x1="98.1" y1="426.3" x2="101.6" y2="426.3" stroke="#333" stroke-width="0.8"/>
<text transform="translate(95.6,429.90000000000003) scale(1.1,1.06)" font-family='"Liberation Sans", sans-serif' font-size="10" fill="#222" text-anchor="end"  stroke="#222" stroke-width="0.18">0</text>
<line x1="98.1" y1="392.40000000000003" x2="101.6" y2="392.40000000000003" stroke="#333" stroke-width="0.8"/>
<text transform="translate(95.6,396.00000000000006) scale(1.1,1.06)" font-family='"Liberation Sans", sans-serif' font-size="10" fill="#222" text-anchor="end"  stroke="#222" stroke-width="0.18">10</text>
<line x1="98.1" y1="358.5" x2="101.6" y2="358.5" stroke="#333" stroke-width="0.8"/>
<text transform="translate(95.6,362.1) scale(1.1,1.06)" font-family='"Liberation Sans", sans-serif' font-size="10" fill="#222" text-anchor="end"  stroke="#222" stroke-width="0.18">20</text>
<text transform="translate(111,346) scale(1.1,1.06)" font-family='"Liberation Sans", sans-serif' font-size="10" fill="#222"  stroke="#222" stroke-width="0.18">e</text>
<text transform="translate(117,341) scale(1.1,1.06)" font-family='"Liberation Sans", sans-serif' font-size="6.5" fill="#222"  stroke="#222" stroke-width="0.18">−17</text>
<text transform="translate(128,346) scale(1.1,1.06)" font-family='"Liberation Sans", sans-serif' font-size="10" fill="#222"  stroke="#222" stroke-width="0.18">x2</text>
<text transform="translate(140,346) scale(1.1,1.06)" font-family='"Liberation Sans", sans-serif' font-size="10" fill="#222" font-style="italic" stroke="#222" stroke-width="0.18">Å</text>
<text transform="translate(98.8,339.2) rotate(90) scale(1.1,1.06)" font-family='"Liberation Sans", sans-serif' font-size="10" fill="#ffa500" text-anchor="end" >SiIV</text>
<text transform="translate(98.3,348.0) rotate(90) scale(1.0,1.0001)" font-family='"Liberation Sans", sans-serif' font-size="10" fill="#ffa500" text-anchor="end" >{</text>
<text transform="translate(117.2,339.2) rotate(90) scale(1.1,1.06)" font-family='"Liberation Sans", sans-serif' font-size="10" fill="#800080" text-anchor="end" >HeII</text>
<text transform="translate(116.7,348.0) rotate(90) scale(1.0,1.0001)" font-family='"Liberation Sans", sans-serif' font-size="10" fill="#800080" text-anchor="end" >{</text>
<text transform="translate(220.3,339.2) rotate(90) scale(1.1,1.06)" font-family='"Liberation Sans", sans-serif' font-size="10" fill="#9b30ff" text-anchor="end" >SiIV</text>
<text transform="translate(219.8,348.0) rotate(90) scale(1.0,1.0001)" font-family='"Liberation Sans", sans-serif' font-size="10" fill="#9b30ff" text-anchor="end" >{</text>
<text transform="translate(311.0,339.2) rotate(90) scale(1.1,1.06)" font-family='"Liberation Sans", sans-serif' font-size="10" fill="#87ceeb" text-anchor="end" >OII</text>
<text transform="translate(310.5,348.0) rotate(90) scale(1.0,1.0001)" font-family='"Liberation Sans", sans-serif' font-size="10" fill="#87ceeb" text-anchor="end" >{</text>
<text transform="translate(323.1,339.2) rotate(90) scale(1.1,1.06)" font-family='"Liberation Sans", sans-serif' font-size="10" fill="#ffa500" text-anchor="end" >CIV</text>
<text transform="translate(322.6,348.0) rotate(90) scale(1.0,1.0001)" font-family='"Liberation Sans", sans-serif' font-size="10" fill="#ffa500" text-anchor="end" >{</text>
<text transform="translate(331.3,339.2) rotate(90) scale(1.1,1.06)" font-family='"Liberation Sans", sans-serif' font-size="10" fill="#87ceeb" text-anchor="end" >OII</text>
<text transform="translate(330.8,348.0) rotate(90) scale(1.0,1.0001)" font-family='"Liberation Sans", sans-serif' font-size="10" fill="#87ceeb" text-anchor="end" >{</text>
<text transform="translate(508.3,334.0) rotate(90) scale(1.1,1.06)" font-family='"Liberation Sans", sans-serif' font-size="10" fill="#ff0000" text-anchor="end" >NV</text>
<text transform="translate(507.8,348.0) rotate(90) scale(1.0,1.0001)" font-family='"Liberation Sans", sans-serif' font-size="10" fill="#ff0000" text-anchor="end" >{</text>
<text transform="translate(553.3,339.2) rotate(90) scale(1.1,1.06)" font-family='"Liberation Sans", sans-serif' font-size="10" fill="#ff0000" text-anchor="end" >SiII</text>
<text transform="translate(552.8,348.0) rotate(90) scale(1.0,1.0001)" font-family='"Liberation Sans", sans-serif' font-size="10" fill="#ff0000" text-anchor="end" >{</text>
<text transform="translate(600.5999999999999,339.2) rotate(90) scale(1.1,1.06)" font-family='"Liberation Sans", sans-serif' font-size="10" fill="#8a2be2" text-anchor="end" >HeII</text>
<text transform="translate(600.0999999999999,348.0) rotate(90) scale(1.0,1.0001)" font-family='"Liberation Sans", sans-serif' font-size="10" fill="#8a2be2" text-anchor="end" >{</text>
<text transform="translate(686.3,339.2) rotate(90) scale(1.1,1.06)" font-family='"Liberation Sans", sans-serif' font-size="10" fill="#87ceeb" text-anchor="end" >Hγ</text>
<text transform="translate(685.8,348.0) rotate(90) scale(1.0,1.0001)" font-family='"Liberation Sans", sans-serif' font-size="10" fill="#87ceeb" text-anchor="end" >{</text>
<text transform="translate(710.0,339.2) rotate(90) scale(1.1,1.06)" font-family='"Liberation Sans", sans-serif' font-size="10" fill="#87ceeb" text-anchor="end" >Hγ</text>
<text transform="translate(709.5,348.0) rotate(90) scale(1.0,1.0001)" font-family='"Liberation Sans", sans-serif' font-size="10" fill="#87ceeb" text-anchor="end" >{</text>
<text transform="translate(822.0,339.2) rotate(90) scale(1.1,1.06)" font-family='"Liberation Sans", sans-serif' font-size="10" fill="#ff0000" text-anchor="end" >SiIV</text>
<text transform="translate(821.5,348.0) rotate(90) scale(1.0,1.0001)" font-family='"Liberation Sans", sans-serif' font-size="10" fill="#ff0000" text-anchor="end" >{</text>
<text transform="translate(855.6999999999999,296.8) rotate(90) scale(1.1,1.06)" font-family='"Liberation Sans", sans-serif' font-size="10" fill="#ffa500" text-anchor="end" >CIII</text>
<text transform="translate(855.1999999999999,304.0) rotate(90) scale(1.0,1.0001)" font-family='"Liberation Sans", sans-serif' font-size="10" fill="#ffa500" text-anchor="end" >{</text>
<text transform="translate(857.6999999999999,339.2) rotate(90) scale(1.1,1.06)" font-family='"Liberation Sans", sans-serif' font-size="10" fill="#008000" text-anchor="end" >Hγ</text>
<text transform="translate(857.1999999999999,348.0) rotate(90) scale(1.0,1.0001)" font-family='"Liberation Sans", sans-serif' font-size="10" fill="#008000" text-anchor="end" >{</text>
<text transform="translate(986.8,339.2) rotate(90) scale(1.1,1.06)" font-family='"Liberation Sans", sans-serif' font-size="10" fill="#800080" text-anchor="end" >CII</text>
<text transform="translate(986.3,348.0) rotate(90) scale(1.0,1.0001)" font-family='"Liberation Sans", sans-serif' font-size="10" fill="#800080" text-anchor="end" >{</text>
<text transform="translate(1004.3,339.2) rotate(90) scale(1.1,1.06)" font-family='"Liberation Sans", sans-serif' font-size="10" fill="#87ceeb" text-anchor="end" >Hβ</text>
<text transform="translate(1003.8,348.0) rotate(90) scale(1.0,1.0001)" font-family='"Liberation Sans", sans-serif' font-size="10" fill="#87ceeb" text-anchor="end" >{</text>
<text transform="translate(1021.8,339.2) rotate(90) scale(1.1,1.06)" font-family='"Liberation Sans", sans-serif' font-size="10" fill="#9932cc" text-anchor="end" >CIII</text>
<text transform="translate(1021.3,348.0) rotate(90) scale(1.0,1.0001)" font-family='"Liberation Sans", sans-serif' font-size="10" fill="#9932cc" text-anchor="end" >{</text>
<text transform="translate(1031.8,339.2) rotate(90) scale(1.1,1.06)" font-family='"Liberation Sans", sans-serif' font-size="10" fill="#87ceeb" text-anchor="end" >Hβ</text>
<text transform="translate(1031.3,348.0) rotate(90) scale(1.0,1.0001)" font-family='"Liberation Sans", sans-serif' font-size="10" fill="#87ceeb" text-anchor="end" >{</text>
<text transform="translate(1064.3,339.2) rotate(90) scale(1.1,1.06)" font-family='"Liberation Sans", sans-serif' font-size="10" fill="#87ceeb" text-anchor="end" >OIII</text>
<text transform="translate(1063.8,348.0) rotate(90) scale(1.0,1.0001)" font-family='"Liberation Sans", sans-serif' font-size="10" fill="#87ceeb" text-anchor="end" >{</text>
<text transform="translate(1091.3,339.2) rotate(90) scale(1.1,1.06)" font-family='"Liberation Sans", sans-serif' font-size="10" fill="#87ceeb" text-anchor="end" >OIII</text>
<text transform="translate(1090.8,348.0) rotate(90) scale(1.0,1.0001)" font-family='"Liberation Sans", sans-serif' font-size="10" fill="#87ceeb" text-anchor="end" >{</text>
<text transform="translate(1093.8,296.8) rotate(90) scale(1.1,1.06)" font-family='"Liberation Sans", sans-serif' font-size="10" fill="#87ceeb" text-anchor="end" >OIII</text>
<text transform="translate(1093.3,304.0) rotate(90) scale(1.0,1.0001)" font-family='"Liberation Sans", sans-serif' font-size="10" fill="#87ceeb" text-anchor="end" >{</text>
<text transform="translate(1120.8,296.8) rotate(90) scale(1.1,1.06)" font-family='"Liberation Sans", sans-serif' font-size="10" fill="#87ceeb" text-anchor="end" >OIII</text>
<text transform="translate(1120.3,304.0) rotate(90) scale(1.0,1.0001)" font-family='"Liberation Sans", sans-serif' font-size="10" fill="#87ceeb" text-anchor="end" >{</text>
<text transform="translate(1125.8,339.2) rotate(90) scale(1.1,1.06)" font-family='"Liberation Sans", sans-serif' font-size="10" fill="#ff0000" text-anchor="end" >CIV</text>
<text transform="translate(1125.3,348.0) rotate(90) scale(1.0,1.0001)" font-family='"Liberation Sans", sans-serif' font-size="10" fill="#ff0000" text-anchor="end" >{</text>
<text transform="translate(1183.8,339.2) rotate(90) scale(1.1,1.06)" font-family='"Liberation Sans", sans-serif' font-size="10" fill="#87ceeb" text-anchor="end" >NaI</text>
<text transform="translate(1183.3,348.0) rotate(90) scale(1.0,1.0001)" font-family='"Liberation Sans", sans-serif' font-size="10" fill="#87ceeb" text-anchor="end" >{</text>
<text transform="translate(1197.3,339.2) rotate(90) scale(1.1,1.06)" font-family='"Liberation Sans", sans-serif' font-size="10" fill="#008000" text-anchor="end" >Hβ</text>
<text transform="translate(1196.8,348.0) rotate(90) scale(1.0,1.0001)" font-family='"Liberation Sans", sans-serif' font-size="10" fill="#008000" text-anchor="end" >{</text>
<text transform="translate(1265.05,296.8) rotate(90) scale(1.1,1.06)" font-family='"Liberation Sans", sans-serif' font-size="10" fill="#ff00ff" text-anchor="end" >OII</text>
<text transform="translate(1264.55,304.0) rotate(90) scale(1.0,1.0001)" font-family='"Liberation Sans", sans-serif' font-size="10" fill="#ff00ff" text-anchor="end" >{</text>
<text transform="translate(1260.8,339.2) rotate(90) scale(1.1,1.06)" font-family='"Liberation Sans", sans-serif' font-size="10" fill="#008000" text-anchor="end" >OIII</text>
<text transform="translate(1260.3,348.0) rotate(90) scale(1.0,1.0001)" font-family='"Liberation Sans", sans-serif' font-size="10" fill="#008000" text-anchor="end" >{</text>
<text transform="translate(1292.3,339.2) rotate(90) scale(1.1,1.06)" font-family='"Liberation Sans", sans-serif' font-size="10" fill="#008000" text-anchor="end" >OIII</text>
<text transform="translate(1291.8,348.0) rotate(90) scale(1.0,1.0001)" font-family='"Liberation Sans", sans-serif' font-size="10" fill="#008000" text-anchor="end" >{</text>
<rect x="480.2" y="450.3" width="16.8" height="6" fill="#ff0000"/>
<text transform="translate(503.7,456.3) scale(1.1,1.06)" font-family='"Liberation Sans", sans-serif' font-size="8" fill="#222"  stroke="#222" stroke-width="0.18">Lyα</text>
<rect x="534" y="450.3" width="16.8" height="6" fill="#008000"/>
<text transform="translate(557.5,456.3) scale(1.1,1.06)" font-family='"Liberation Sans", sans-serif' font-size="8" fill="#222"  stroke="#222" stroke-width="0.18">OII</text>
<rect x="586.3" y="450.3" width="16.8" height="6" fill="#8a2be2"/>
<text transform="translate(609.8,456.3) scale(1.1,1.06)" font-family='"Liberation Sans", sans-serif' font-size="8" fill="#222"  stroke="#222" stroke-width="0.18">CIV</text>
<rect x="641.7" y="450.3" width="16.8" height="6" fill="#800080"/>
<text transform="translate(665.2,456.3) scale(1.1,1.06)" font-family='"Liberation Sans", sans-serif' font-size="8" fill="#222"  stroke="#222" stroke-width="0.18">CIII</text>
<rect x="693.4" y="450.3" width="16.8" height="6" fill="#ff00ff"/>
<text transform="translate(716.9,456.3) scale(1.1,1.06)" font-family='"Liberation Sans", sans-serif' font-size="8" fill="#222"  stroke="#222" stroke-width="0.18">MgII</text>
<rect x="749.3" y="450.3" width="16.8" height="6" fill="#ffa500"/>
<text transform="translate(772.8,456.3) scale(1.1,1.06)" font-family='"Liberation Sans", sans-serif' font-size="8" fill="#222"  stroke="#222" stroke-width="0.18">HeII</text>
<rect x="803.5" y="450.3" width="16.8" height="6" fill="#87ceeb"/>
<text transform="translate(827.0,456.3) scale(1.1,1.06)" font-family='"Liberation Sans", sans-serif' font-size="8" fill="#222"  stroke="#222" stroke-width="0.18">(K)CaII</text>
<rect x="869.3" y="450.3" width="16.8" height="6" fill="#87ceeb"/>
<text transform="translate(892.8,456.3) scale(1.1,1.06)" font-family='"Liberation Sans", sans-serif' font-size="8" fill="#222"  stroke="#222" stroke-width="0.18">(H)CaII</text>
<text transform="translate(69.8,498.5) scale(1.0,1.08)" font-family='"Liberation Mono", monospace' font-size="13.05" fill="#000" stroke="#000" stroke-width="0.3">HSC-DEX : Possible Matches = 1 (within +/- 3")  P(LAE)/P(OII): </text>
<text transform="translate(561.4,498.5) scale(1.144,1.06)" font-family='"Liberation Sans", sans-serif' font-size="13" fill="#000" stroke="#000" stroke-width="0.25">0.106</text>
<text transform="translate(602.7,494.0) scale(1.144,1.06)" font-family='"Liberation Sans", sans-serif' font-size="8.6" fill="#000" >0.227</text>
<text transform="translate(602.7,502.3) scale(1.144,1.06)" font-family='"Liberation Sans", sans-serif' font-size="8.6" fill="#000" >0.063</text>
<text transform="translate(635.4,498.5) scale(1.0,1.08)" font-family='"Liberation Mono", monospace' font-size="13.05" fill="#000" stroke="#000" stroke-width="0.3">(r)</text>
<text transform="translate(69.8,785.7) scale(1.0,1.08)" font-family='"Liberation Mono", monospace' font-size="13.05" fill="#000" stroke="#000" stroke-width="0.3">Separation</text>
<text transform="translate(69.8,800.3) scale(1.0,1.08)" font-family='"Liberation Mono", monospace' font-size="13.05" fill="#000" stroke="#000" stroke-width="0.3">Match score</text>
<text transform="translate(69.8,815.3) scale(1.0,1.08)" font-family='"Liberation Mono", monospace' font-size="13.05" fill="#000" stroke="#000" stroke-width="0.3">RA, Dec</text>
<text transform="translate(69.8,829.6) scale(1.0,1.08)" font-family='"Liberation Mono", monospace' font-size="13.05" fill="#000" stroke="#000" stroke-width="0.3">Spec z</text>
<text transform="translate(69.8,844.2) scale(1.0,1.08)" font-family='"Liberation Mono", monospace' font-size="13.05" fill="#000" stroke="#000" stroke-width="0.3">Photo z</text>
<text transform="translate(69.8,859) scale(1.0,1.08)" font-family='"Liberation Mono", monospace' font-size="13.05" fill="#000" stroke="#000" stroke-width="0.3">Est LyA rest-EW</text>
<text transform="translate(69.8,873.6) scale(1.0,1.08)" font-family='"Liberation Mono", monospace' font-size="13.05" fill="#000" stroke="#000" stroke-width="0.3">mag</text>
<text transform="translate(69.8,888.1) scale(1.0,1.08)" font-family='"Liberation Mono", monospace' font-size="13.05" fill="#000" stroke="#000" stroke-width="0.3">P(LAE)/P(OII)</text>
<text transform="translate(286.5,778.9) scale(1.0,1.08)" font-family='"Liberation Mono", monospace' font-size="13.05" fill="#0000ff" stroke="#0000ff" stroke-width="0.3">0.373698"</text>
<text transform="translate(286.5,793.2) scale(1.0,1.08)" font-family='"Liberation Mono", monospace' font-size="13.05" fill="#0000ff" stroke="#0000ff" stroke-width="0.3">1.000</text>
<text transform="translate(286.5,807.6) scale(1.0,1.08)" font-family='"Liberation Mono", monospace' font-size="13.05" fill="#0000ff" stroke="#0000ff" stroke-width="0.3">224.380795, 47.286970</text>
<text transform="translate(286.5,822.6) scale(1.0,1.08)" font-family='"Liberation Mono", monospace' font-size="13.05" fill="#0000ff" stroke="#0000ff" stroke-width="0.3">N/A</text>
<text transform="translate(286.5,837.1) scale(1.0,1.08)" font-family='"Liberation Mono", monospace' font-size="13.05" fill="#0000ff" stroke="#0000ff" stroke-width="0.3">N/A</text>
<text transform="translate(286.5,853.9) scale(1.0,1.08)" font-family='"Liberation Mono", monospace' font-size="13.05" fill="#0000ff" stroke="#0000ff" stroke-width="0.3">0.45(</text>
<text transform="translate(326.55,853.9) scale(1.144,1.06)" font-family='"Liberation Sans", sans-serif' font-size="13" fill="#0000ff" stroke="#0000ff" stroke-width="0.25">±</text>
<text transform="translate(336.5,853.9) scale(1.0,1.08)" font-family='"Liberation Mono", monospace' font-size="13.05" fill="#0000ff" stroke="#0000ff" stroke-width="0.3">0.14)</text>
<text transform="translate(286.5,869.3) scale(1.0,1.08)" font-family='"Liberation Mono", monospace' font-size="13.05" fill="#0000ff" stroke="#0000ff" stroke-width="0.3">18.57(18.57,18.57)R</text>
<text transform="translate(376,854.2) scale(1.144,1.06)" font-family='"Liberation Sans", sans-serif' font-size="13" fill="#0000ff" font-style="italic" stroke="#0000ff" stroke-width="0.25">Å</text>
<text transform="translate(286.6,886.2) scale(1.144,1.06)" font-family='"Liberation Sans", sans-serif' font-size="13" fill="#0000ff" stroke="#0000ff" stroke-width="0.25">0.108</text>
<text transform="translate(328.5,881.6) scale(1.144,1.06)" font-family='"Liberation Sans", sans-serif' font-size="8.4" fill="#0000ff" >0.201</text>
<text transform="translate(328.5,889.4) scale(1.144,1.06)" font-family='"Liberation Sans", sans-serif' font-size="8.4" fill="#0000ff" >0.06</text>
<text transform="translate(937.5,821.5) scale(1.0,1.08)" font-family='"Liberation Mono", monospace' font-size="13.05" fill="#000" stroke="#000" stroke-width="0.3">Phot z plot not available.</text>
<rect x="69.7" y="532.5" width="148" height="148" fill="#f5f5f5"/>
<rect x="69.7" y="532.5" width="148" height="148" filter="url(#nzl)" opacity="0.07"/>
<clipPath id="c1"><rect x="69.7" y="532.5" width="148" height="148"/></clipPath><g clip-path="url(#c1)">
<ellipse cx="153" cy="603" rx="21" ry="24" fill="#c8c8c8" filter="url(#blur5)"/>
<g filter="url(#blur15)"><circle cx="145.5" cy="604" r="10.5" fill="#000"/><circle cx="157.5" cy="607" r="11.5" fill="#000"/><circle cx="150.5" cy="618" r="11.5" fill="#000"/><circle cx="151" cy="610" r="11" fill="#000"/></g>
<ellipse cx="108" cy="577.5" rx="8" ry="6.5" fill="#c4c4c4" filter="url(#blur3)"/>
<circle cx="124.9" cy="553.4" r="12.3" fill="none" stroke="#787878" stroke-width="1.1"/>
<circle cx="124.9" cy="553.4" r="13.0" fill="none" stroke="#8a8a8a" stroke-width="1.8" stroke-dasharray="1.6,1.3"/>
<circle cx="149.1" cy="560.0" r="12.3" fill="none" stroke="#787878" stroke-width="1.1"/>
<circle cx="149.1" cy="560.0" r="13.0" fill="none" stroke="#8a8a8a" stroke-width="1.8" stroke-dasharray="1.6,1.3"/>
<circle cx="172.1" cy="565.5" r="12.3" fill="none" stroke="#787878" stroke-width="1.2"/>
<circle cx="132.6" cy="577.6" r="12.3" fill="none" stroke="#787878" stroke-width="1.1"/>
<circle cx="132.6" cy="577.6" r="13.0" fill="none" stroke="#8a8a8a" stroke-width="1.8" stroke-dasharray="1.6,1.3"/>
<circle cx="154.6" cy="582.0" r="12.3" fill="none" stroke="#787878" stroke-width="1.2"/>
<circle cx="178.8" cy="589.7" r="12.3" fill="none" stroke="#787878" stroke-width="1.2"/>
<circle cx="184.4" cy="611.8" r="12.3" fill="none" stroke="#787878" stroke-width="1.2"/>
<circle cx="167.9" cy="630.6" r="12.3" fill="none" stroke="#787878" stroke-width="1.1"/>
<circle cx="167.9" cy="630.6" r="13.0" fill="none" stroke="#8a8a8a" stroke-width="1.8" stroke-dasharray="1.6,1.3"/>
<circle cx="193.0" cy="635.0" r="12.3" fill="none" stroke="#787878" stroke-width="1.1"/>
<circle cx="193.0" cy="635.0" r="13.0" fill="none" stroke="#8a8a8a" stroke-width="1.8" stroke-dasharray="1.6,1.3"/>
<circle cx="151.2" cy="647.1" r="12.3" fill="none" stroke="#787878" stroke-width="1.1"/>
<circle cx="151.2" cy="647.1" r="13.0" fill="none" stroke="#8a8a8a" stroke-width="1.8" stroke-dasharray="1.6,1.3"/>
<circle cx="174.4" cy="652.5" r="12.3" fill="none" stroke="#787878" stroke-width="1.1"/>
<circle cx="174.4" cy="652.5" r="13.0" fill="none" stroke="#8a8a8a" stroke-width="1.8" stroke-dasharray="1.6,1.3"/>
<circle cx="139.1" cy="599.7" r="12.3" fill="none" stroke="#0000ff" stroke-width="2" stroke-dasharray="3,1.2"/>
<circle cx="163.4" cy="606.2" r="12.3" fill="none" stroke="#ff0000" stroke-width="1.3"/>
<circle cx="121.6" cy="618.3" r="12.3" fill="none" stroke="#ffa500" stroke-width="2" stroke-dasharray="3,1.2"/>
<circle cx="144.7" cy="623.9" r="12.3" fill="none" stroke="#00ff00" stroke-width="2" stroke-dasharray="3,1.2"/>
</g>
<path d="M141.0,606.7 h6 M144.0,603.7 v6" stroke="#ff0000" stroke-width="1.2"/>
<rect x="69.7" y="532.5" width="148" height="148" fill="none" stroke="#333" stroke-width="1.1"/>
<line x1="78.6" y1="680.5" x2="78.6" y2="684.0" stroke="#333" stroke-width="0.8"/>
<text transform="translate(78.64,695.5) scale(1.1,1.06)" font-family='"Liberation Sans", sans-serif' font-size="11" fill="#222" text-anchor="middle"  stroke="#222" stroke-width="0.18">−4</text>
<line x1="66.2" y1="672.1" x2="69.7" y2="672.1" stroke="#333" stroke-width="0.8"/>
<text transform="translate(63.7,676.0600000000001) scale(1.1,1.06)" font-family='"Liberation Sans", sans-serif' font-size="11" fill="#222" text-anchor="end"  stroke="#222" stroke-width="0.18">−4</text>
<line x1="111.3" y1="680.5" x2="111.3" y2="684.0" stroke="#333" stroke-width="0.8"/>
<text transform="translate(111.32,695.5) scale(1.1,1.06)" font-family='"Liberation Sans", sans-serif' font-size="11" fill="#222" text-anchor="middle"  stroke="#222" stroke-width="0.18">−2</text>
<line x1="66.2" y1="639.4" x2="69.7" y2="639.4" stroke="#333" stroke-width="0.8"/>
<text transform="translate(63.7,643.38) scale(1.1,1.06)" font-family='"Liberation Sans", sans-serif' font-size="11" fill="#222" text-anchor="end"  stroke="#222" stroke-width="0.18">−2</text>
<line x1="144.0" y1="680.5" x2="144.0" y2="684.0" stroke="#333" stroke-width="0.8"/>
<text transform="translate(144.0,695.5) scale(1.1,1.06)" font-family='"Liberation Sans", sans-serif' font-size="11" fill="#222" text-anchor="middle"  stroke="#222" stroke-width="0.18">0</text>
<line x1="66.2" y1="606.7" x2="69.7" y2="606.7" stroke="#333" stroke-width="0.8"/>
<text transform="translate(63.7,610.7) scale(1.1,1.06)" font-family='"Liberation Sans", sans-serif' font-size="11" fill="#222" text-anchor="end"  stroke="#222" stroke-width="0.18">0</text>
<line x1="176.7" y1="680.5" x2="176.7" y2="684.0" stroke="#333" stroke-width="0.8"/>
<text transform="translate(176.68,695.5) scale(1.1,1.06)" font-family='"Liberation Sans", sans-serif' font-size="11" fill="#222" text-anchor="middle"  stroke="#222" stroke-width="0.18">2</text>
<line x1="66.2" y1="574.0" x2="69.7" y2="574.0" stroke="#333" stroke-width="0.8"/>
<text transform="translate(63.7,578.0200000000001) scale(1.1,1.06)" font-family='"Liberation Sans", sans-serif' font-size="11" fill="#222" text-anchor="end"  stroke="#222" stroke-width="0.18">2</text>
<line x1="209.4" y1="680.5" x2="209.4" y2="684.0" stroke="#333" stroke-width="0.8"/>
<text transform="translate(209.36,695.5) scale(1.1,1.06)" font-family='"Liberation Sans", sans-serif' font-size="11" fill="#222" text-anchor="middle"  stroke="#222" stroke-width="0.18">4</text>
<line x1="66.2" y1="541.3" x2="69.7" y2="541.3" stroke="#333" stroke-width="0.8"/>
<text transform="translate(63.7,545.34) scale(1.1,1.06)" font-family='"Liberation Sans", sans-serif' font-size="11" fill="#222" text-anchor="end"  stroke="#222" stroke-width="0.18">4</text>
<text transform="translate(143.7,525.5) scale(1.1,1.06)" font-family='"Liberation Sans", sans-serif' font-size="13" fill="#111" text-anchor="middle"  stroke="#111" stroke-width="0.18">Fiber Positions</text>
<text transform="translate(143.7,707.0) scale(1.1,1.06)" font-family='"Liberation Sans", sans-serif' font-size="11" fill="#111" text-anchor="middle"  stroke="#111" stroke-width="0.18">arcsecs</text>
<rect x="95.0" y="557.7" width="98.0" height="98.0" fill="none" stroke="#ff0000" stroke-width="1.2"/>
<text transform="translate(144.0,546.7) scale(1.1,1.06)" font-family='"Liberation Sans", sans-serif' font-size="11" fill="#ff0000" text-anchor="middle"  stroke="#ff0000" stroke-width="0.18">N</text>
<text transform="translate(79.5,610.7) scale(1.1,1.06)" font-family='"Liberation Sans", sans-serif' font-size="11" fill="#ff0000" text-anchor="middle"  stroke="#ff0000" stroke-width="0.18">E</text>
<clipPath id="c2"><rect x="255.3" y="532.5" width="148" height="148"/></clipPath><g clip-path="url(#c2)">
<polygon points="254,531.5 404.5,531.5 404.5,682 254,682" fill="#414487"/>
<polygon points="293.6,531.5 404.5,531.5 404.5,640 383,644 374,648.5 348,638 340,635 329,626 322,622 316,611 303,567" fill="#440154"/>
<polygon points="309.5,531.5 346,531.5 349,550 318,556" fill="#3b5f8c"/>
<polygon points="377,531.5 404.5,531.5 404.5,553 392,556 381,548" fill="#2a8c8c"/>
<polygon points="345,553 381,545 388,560 380,576 365,578 350,568" fill="#2a8c8c"/>
<polygon points="351,553 378,548 382,563 374,572 362,572 354,564" fill="#6ccc5f"/>
<polygon points="358,557 373,554 375,566 366,569" fill="#fde725"/>
<polygon points="300,560 310,563 328,573 318,600 316,605 305,575" fill="#3b5f8c"/>
<polygon points="305,572 318,571 330,572 350,578 366,590 381,598 404.5,596 404.5,640 383,644 374,648.5 348,638 340,635 329,626 322,622 316,611 313,603" fill="#2a8c8c"/>
<polygon points="330.3,573.7 336.3,573.6 347.6,578.3 360.1,589.5 370.5,601.2 370.5,603.7 360.2,617.9 351.0,629.8 345.8,633.2 336.3,631.8 328.0,625.4 321.9,623.4 315.1,617.8 313.9,610.9 316.9,598.2 320.1,587.6 323.3,578.6" fill="#22a385"/>
<polygon points="330.8,575.9 336.4,575.8 346.9,580.3 358.3,590.7 368.3,601.4 368.3,603.8 358.4,616.7 350.0,627.9 345.3,631.0 336.4,629.6 329.0,623.5 323.3,621.7 317.0,616.7 316.0,610.3 319.0,598.8 321.7,589.0 324.4,580.5" fill="#6ccc5f"/>
<polygon points="331.4,578.1 336.6,578.1 346.1,582.5 356.4,592 366,601.6 366,603.8 356.4,615.5 349,625.8 344.7,628.8 336.6,627.3 330,621.4 324.8,620 319,615.5 318.2,609.7 321.2,599.4 323.4,590.6 325.6,582.5" fill="#fde725"/>
<polygon points="325.6,620 328.5,620 328.5,622.9 325.6,622.9" fill="#440154"/>
<polygon points="356,630 368,625 380,633 384,640 374,648.5 355,642" fill="#440154"/>
</g>
<path d="M293.2,606.7 H320.1 M338.1,606.7 H366.7 M329.1,569.1 V597.7 M329.1,615.7 V644.3" stroke="#ff0000" stroke-width="1.2"/>
<rect x="255.3" y="532.5" width="148" height="148" fill="none" stroke="#333" stroke-width="1.1"/>
<line x1="263.7" y1="680.5" x2="263.7" y2="684.0" stroke="#333" stroke-width="0.8"/>
<text transform="translate(263.74,695.5) scale(1.1,1.06)" font-family='"Liberation Sans", sans-serif' font-size="11" fill="#222" text-anchor="middle"  stroke="#222" stroke-width="0.18">−4</text>
<line x1="251.8" y1="672.1" x2="255.3" y2="672.1" stroke="#333" stroke-width="0.8"/>
<text transform="translate(249.3,676.0600000000001) scale(1.1,1.06)" font-family='"Liberation Sans", sans-serif' font-size="11" fill="#222" text-anchor="end"  stroke="#222" stroke-width="0.18">−4</text>
<line x1="296.4" y1="680.5" x2="296.4" y2="684.0" stroke="#333" stroke-width="0.8"/>
<text transform="translate(296.42,695.5) scale(1.1,1.06)" font-family='"Liberation Sans", sans-serif' font-size="11" fill="#222" text-anchor="middle"  stroke="#222" stroke-width="0.18">−2</text>
<line x1="251.8" y1="639.4" x2="255.3" y2="639.4" stroke="#333" stroke-width="0.8"/>
<text transform="translate(249.3,643.38) scale(1.1,1.06)" font-family='"Liberation Sans", sans-serif' font-size="11" fill="#222" text-anchor="end"  stroke="#222" stroke-width="0.18">−2</text>
<line x1="329.1" y1="680.5" x2="329.1" y2="684.0" stroke="#333" stroke-width="0.8"/>
<text transform="translate(329.1,695.5) scale(1.1,1.06)" font-family='"Liberation Sans", sans-serif' font-size="11" fill="#222" text-anchor="middle"  stroke="#222" stroke-width="0.18">0</text>
<line x1="251.8" y1="606.7" x2="255.3" y2="606.7" stroke="#333" stroke-width="0.8"/>
<text transform="translate(249.3,610.7) scale(1.1,1.06)" font-family='"Liberation Sans", sans-serif' font-size="11" fill="#222" text-anchor="end"  stroke="#222" stroke-width="0.18">0</text>
<line x1="361.8" y1="680.5" x2="361.8" y2="684.0" stroke="#333" stroke-width="0.8"/>
<text transform="translate(361.78000000000003,695.5) scale(1.1,1.06)" font-family='"Liberation Sans", sans-serif' font-size="11" fill="#222" text-anchor="middle"  stroke="#222" stroke-width="0.18">2</text>
<line x1="251.8" y1="574.0" x2="255.3" y2="574.0" stroke="#333" stroke-width="0.8"/>
<text transform="translate(249.3,578.0200000000001) scale(1.1,1.06)" font-family='"Liberation Sans", sans-serif' font-size="11" fill="#222" text-anchor="end"  stroke="#222" stroke-width="0.18">2</text>
<line x1="394.5" y1="680.5" x2="394.5" y2="684.0" stroke="#333" stroke-width="0.8"/>
<text transform="translate(394.46000000000004,695.5) scale(1.1,1.06)" font-family='"Liberation Sans", sans-serif' font-size="11" fill="#222" text-anchor="middle"  stroke="#222" stroke-width="0.18">4</text>
<line x1="251.8" y1="541.3" x2="255.3" y2="541.3" stroke="#333" stroke-width="0.8"/>
<text transform="translate(249.3,545.34) scale(1.1,1.06)" font-family='"Liberation Sans", sans-serif' font-size="11" fill="#222" text-anchor="end"  stroke="#222" stroke-width="0.18">4</text>
<text transform="translate(329.3,525.5) scale(1.1,1.06)" font-family='"Liberation Sans", sans-serif' font-size="13" fill="#111" text-anchor="middle"  stroke="#111" stroke-width="0.18">Lineflux Map</text>
<text transform="translate(329.3,707.0) scale(1.1,1.06)" font-family='"Liberation Sans", sans-serif' font-size="11" fill="#111" text-anchor="middle"  stroke="#111" stroke-width="0.18">s/b: 3.28 +/- nan</text>
<rect x="280.1" y="557.7" width="98.0" height="98.0" fill="none" stroke="#ff0000" stroke-width="1.2"/>
<text transform="translate(329.1,546.7) scale(1.1,1.06)" font-family='"Liberation Sans", sans-serif' font-size="11" fill="#ff0000" text-anchor="middle"  stroke="#ff0000" stroke-width="0.18">N</text>
<text transform="translate(264.6,610.7) scale(1.1,1.06)" font-family='"Liberation Sans", sans-serif' font-size="11" fill="#ff0000" text-anchor="middle"  stroke="#ff0000" stroke-width="0.18">E</text>
<rect x="440.8" y="532.6" width="148" height="148" fill="#f3f3f3"/>
<rect x="440.8" y="532.6" width="148" height="148" filter="url(#nzl)" opacity="0.07"/>
<ellipse cx="520.4" cy="610.4" rx="24" ry="24" fill="#909090" filter="url(#blur3)"/>
<ellipse cx="520.4" cy="610.4" rx="20" ry="19.5" fill="#000" filter="url(#blur15)"/>
<ellipse cx="481" cy="577" rx="8.5" ry="6.5" fill="#c0c0c0" filter="url(#blur3)"/>
<ellipse cx="520.9" cy="610.6" rx="27.0" ry="24.6" fill="none" stroke="#f5c800" stroke-width="1.4" transform="rotate(12 520.9 610.6)"/>
<path d="M476.8,606.2 H506.7 M523.1,606.2 H551.8 M514.9,569.4 V598.0 M514.9,614.4 V644" stroke="#ff0000" stroke-width="1.2"/>
<rect x="513" y="603.5" width="13.1" height="13.2" fill="none" stroke="#0000ff" stroke-width="1.2"/>
<rect x="440.8" y="532.6" width="148" height="148" fill="none" stroke="#333" stroke-width="1.1"/>
<line x1="448.8" y1="680.6" x2="448.8" y2="684.1" stroke="#333" stroke-width="0.8"/>
<text transform="translate(448.84000000000003,695.6) scale(1.1,1.06)" font-family='"Liberation Sans", sans-serif' font-size="11" fill="#222" text-anchor="middle"  stroke="#222" stroke-width="0.18">−4</text>
<line x1="437.3" y1="672.1" x2="440.8" y2="672.1" stroke="#333" stroke-width="0.8"/>
<text transform="translate(434.8,676.0600000000001) scale(1.1,1.06)" font-family='"Liberation Sans", sans-serif' font-size="11" fill="#222" text-anchor="end"  stroke="#222" stroke-width="0.18">−4</text>
<line x1="481.5" y1="680.6" x2="481.5" y2="684.1" stroke="#333" stroke-width="0.8"/>
<text transform="translate(481.52000000000004,695.6) scale(1.1,1.06)" font-family='"Liberation Sans", sans-serif' font-size="11" fill="#222" text-anchor="middle"  stroke="#222" stroke-width="0.18">−2</text>
<line x1="437.3" y1="639.4" x2="440.8" y2="639.4" stroke="#333" stroke-width="0.8"/>
<text transform="translate(434.8,643.38) scale(1.1,1.06)" font-family='"Liberation Sans", sans-serif' font-size="11" fill="#222" text-anchor="end"  stroke="#222" stroke-width="0.18">−2</text>
<line x1="514.2" y1="680.6" x2="514.2" y2="684.1" stroke="#333" stroke-width="0.8"/>
<text transform="translate(514.2,695.6) scale(1.1,1.06)" font-family='"Liberation Sans", sans-serif' font-size="11" fill="#222" text-anchor="middle"  stroke="#222" stroke-width="0.18">0</text>
<line x1="437.3" y1="606.7" x2="440.8" y2="606.7" stroke="#333" stroke-width="0.8"/>
<text transform="translate(434.8,610.7) scale(1.1,1.06)" font-family='"Liberation Sans", sans-serif' font-size="11" fill="#222" text-anchor="end"  stroke="#222" stroke-width="0.18">0</text>
<line x1="546.9" y1="680.6" x2="546.9" y2="684.1" stroke="#333" stroke-width="0.8"/>
<text transform="translate(546.88,695.6) scale(1.1,1.06)" font-family='"Liberation Sans", sans-serif' font-size="11" fill="#222" text-anchor="middle"  stroke="#222" stroke-width="0.18">2</text>
<line x1="437.3" y1="574.0" x2="440.8" y2="574.0" stroke="#333" stroke-width="0.8"/>
<text transform="translate(434.8,578.0200000000001) scale(1.1,1.06)" font-family='"Liberation Sans", sans-serif' font-size="11" fill="#222" text-anchor="end"  stroke="#222" stroke-width="0.18">2</text>
<line x1="579.6" y1="680.6" x2="579.6" y2="684.1" stroke="#333" stroke-width="0.8"/>
<text transform="translate(579.5600000000001,695.6) scale(1.1,1.06)" font-family='"Liberation Sans", sans-serif' font-size="11" fill="#222" text-anchor="middle"  stroke="#222" stroke-width="0.18">4</text>
<line x1="437.3" y1="541.3" x2="440.8" y2="541.3" stroke="#333" stroke-width="0.8"/>
<text transform="translate(434.8,545.34) scale(1.1,1.06)" font-family='"Liberation Sans", sans-serif' font-size="11" fill="#222" text-anchor="end"  stroke="#222" stroke-width="0.18">4</text>
<text transform="translate(514.8,525.5) scale(1.1,1.06)" font-family='"Liberation Sans", sans-serif' font-size="13" fill="#111" text-anchor="middle"  stroke="#111" stroke-width="0.18">HSC(26.2) r</text>
<text transform="translate(514.8,707.0) scale(1.1,1.06)" font-family='"Liberation Sans", sans-serif' font-size="11" fill="#111" text-anchor="middle"  stroke="#111" stroke-width="0.18">m:18.5  re:1.6"  s:0.4"</text>
<text transform="translate(514.8,719.5) scale(1.1,1.06)" font-family='"Liberation Sans", sans-serif' font-size="11" fill="#111" text-anchor="middle"  stroke="#111" stroke-width="0.18">EWr: 0, PLAE: 0.106</text>
<rect x="465.2" y="557.7" width="98.0" height="98.0" fill="none" stroke="#ff0000" stroke-width="1.2"/>
<text transform="translate(514.2,546.7) scale(1.1,1.06)" font-family='"Liberation Sans", sans-serif' font-size="11" fill="#ff0000" text-anchor="middle"  stroke="#ff0000" stroke-width="0.18">N</text>
<text transform="translate(449.70000000000005,610.7) scale(1.1,1.06)" font-family='"Liberation Sans", sans-serif' font-size="11" fill="#ff0000" text-anchor="middle"  stroke="#ff0000" stroke-width="0.18">E</text>
</svg>
</body></html>
